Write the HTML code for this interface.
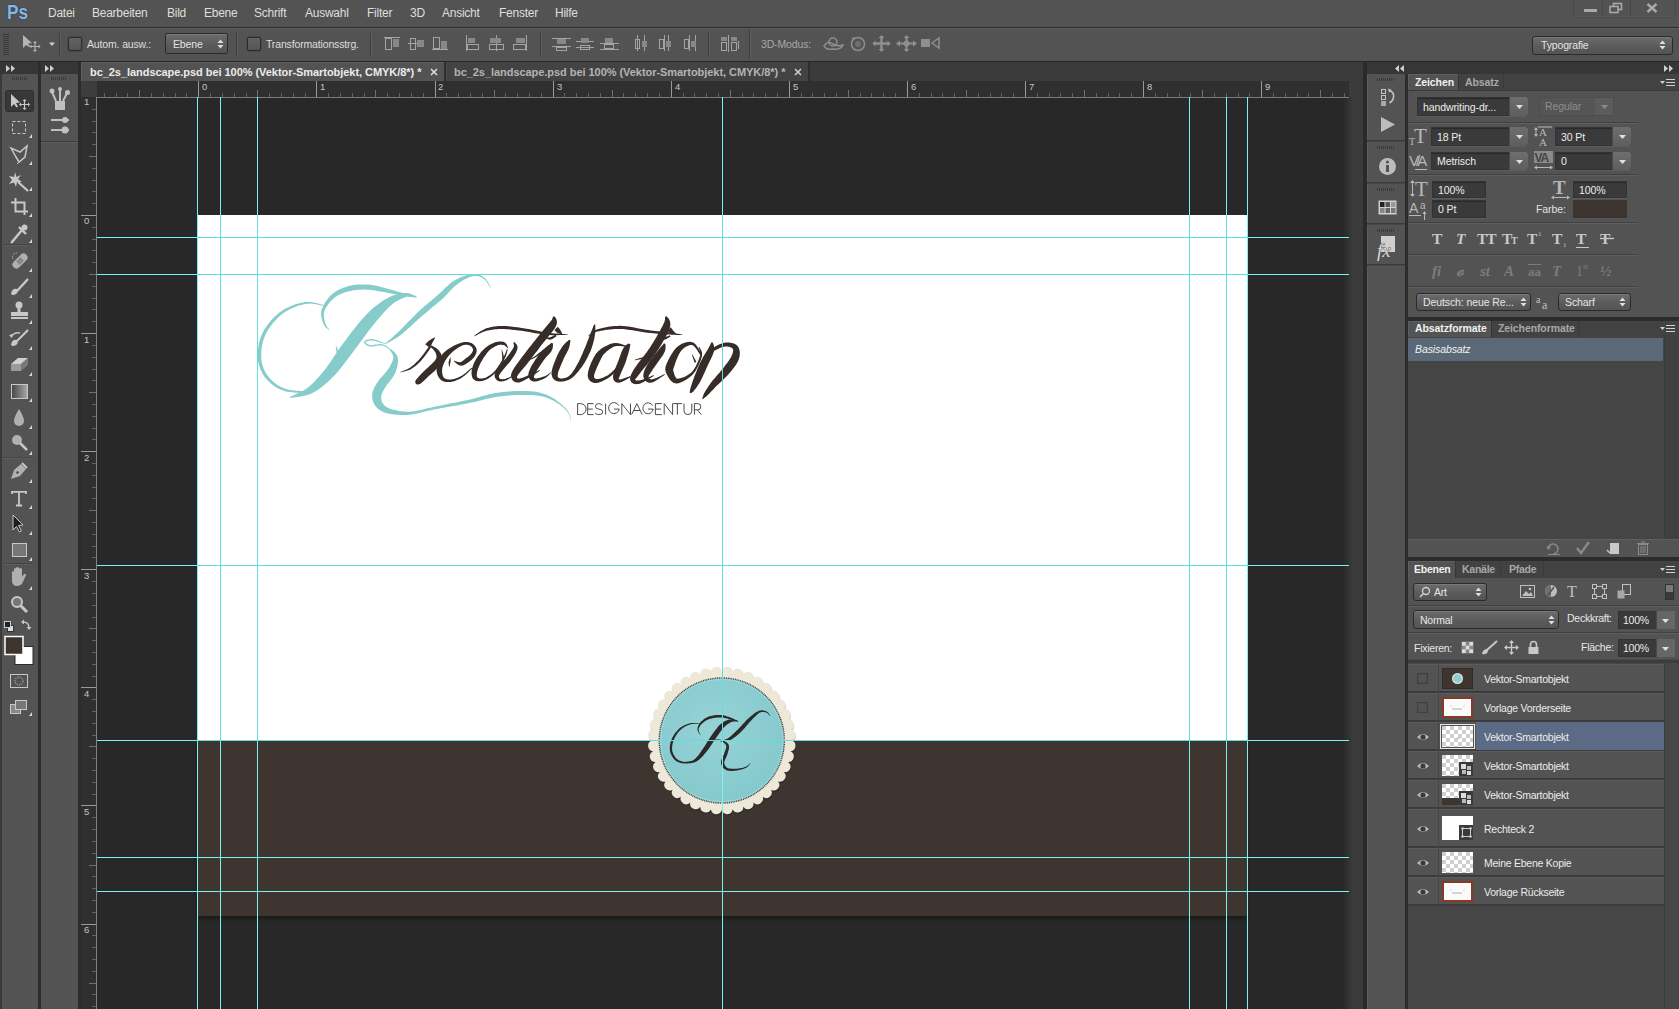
<!DOCTYPE html>
<html><head><meta charset="utf-8"><style>
*{margin:0;padding:0;box-sizing:border-box}
html,body{width:1679px;height:1009px;overflow:hidden;background:#535353;font-family:"Liberation Sans",sans-serif;position:relative}
.a{position:absolute}
.t{position:absolute;white-space:nowrap;line-height:1}



.mn{font-size:12px;color:#dcdcdc;letter-spacing:-0.25px}
.op{font-size:10.5px;color:#dedede;letter-spacing:-0.15px}
.chk{position:absolute;width:14px;height:14px;border:1px solid #2b2b2b;border-radius:2px;background:linear-gradient(#626262,#555);box-shadow:0 0 0 1px #4a4a4a}
.dd{position:absolute;border:1px solid #2a2a2a;border-radius:2px;background:linear-gradient(#6c6c6c,#5a5a5a 60%,#545454);box-shadow:inset 0 1px 0 #7a7a7a}
.sep{position:absolute;width:2px;border-left:1px solid #3e3e3e;border-right:1px solid #5f5f5f}


.tab{font-size:11px;letter-spacing:-0.05px}
.rl{font-size:9px;color:#bdbdbd}


.gv{position:absolute;width:1px;background:#6cf0f0}
.gh{position:absolute;height:1px;background:#6cf0f0}






.pt{font-size:10.5px;color:#e6e6e6;letter-spacing:-0.1px}
.fld{position:absolute;background:#3a3a3a;border:1px solid #333;box-shadow:inset 0 1px 1px #2a2a2a,0 1px 0 #5c5c5c}
.btn{position:absolute;background:linear-gradient(#6e6e6e,#5e5e5e);border-left:1px solid #4a4a4a}
.hsep{position:absolute;height:2px;border-top:1px solid #404040;border-bottom:1px solid #5f5f5f}
.ser{font-family:"Liberation Serif",serif}


.lt{font-size:10.5px;color:#ececec;letter-spacing:-0.25px}

</style></head><body>
<div class="a" style="left:0px;top:0px;width:1679px;height:27px;background:#535353;"></div>
<div class="a" style="left:0px;top:27px;width:1679px;height:1px;background:#2a2a2a;"></div>
<div class="a" style="left:0px;top:28px;width:1679px;height:33px;background:#535353;"></div>
<div class="a" style="left:0px;top:28px;width:1679px;height:1px;background:#5e5e5e;"></div>
<div class="a" style="left:0px;top:61px;width:1679px;height:1px;background:#262626;"></div>
<div class="a" style="left:0px;top:62px;width:81px;height:12px;background:#363636;"></div>
<div class="a" style="left:0px;top:74px;width:38px;height:935px;background:#535353;"></div>
<div class="a" style="left:0px;top:74px;width:2px;height:935px;background:#3a3a3a;"></div>
<div class="a" style="left:38px;top:62px;width:3px;height:947px;background:#2c2c2c;"></div>
<div class="a" style="left:41px;top:74px;width:37px;height:935px;background:#535353;"></div>
<div class="a" style="left:78px;top:62px;width:3px;height:947px;background:#2c2c2c;"></div>
<div class="a" style="left:81px;top:62px;width:1285px;height:19px;background:#3b3b3b;"></div>
<div class="a" style="left:81px;top:81px;width:1268px;height:16px;background:#2f2f2f;"></div>
<div class="a" style="left:81px;top:97px;width:16px;height:912px;background:#2f2f2f;"></div>
<div class="a" style="left:97px;top:97px;width:1252px;height:912px;background:#282828;"></div>
<div class="a" style="left:1349px;top:81px;width:14px;height:928px;background:#3b3b3b;"></div>
<div class="a" style="left:1343px;top:97px;width:10px;height:912px;background:linear-gradient(90deg,#282828,#3b3b3b);"></div>
<div class="a" style="left:1363px;top:62px;width:4px;height:947px;background:#2a2a2a;"></div>
<div class="a" style="left:1367px;top:62px;width:312px;height:12px;background:#363636;"></div>
<div class="a" style="left:1367px;top:74px;width:38px;height:935px;background:#474747;"></div>
<div class="a" style="left:1405px;top:74px;width:3px;height:935px;background:#2c2c2c;"></div>
<div class="a" style="left:1408px;top:74px;width:271px;height:935px;background:#535353;"></div>
<div class="t" style="left:7px;top:2px;font-size:20px;font-weight:bold;color:#86b6e2;transform:scaleX(0.86);transform-origin:0 0;text-shadow:0 0 1px #1c3550,0 0 1px #1c3550">Ps</div>
<div class="t mn" style="left:48px;top:6.84px;font-size:12px;color:#dedede;">Datei</div>
<div class="t mn" style="left:92px;top:6.84px;font-size:12px;color:#dedede;">Bearbeiten</div>
<div class="t mn" style="left:167px;top:6.84px;font-size:12px;color:#dedede;">Bild</div>
<div class="t mn" style="left:204px;top:6.84px;font-size:12px;color:#dedede;">Ebene</div>
<div class="t mn" style="left:254px;top:6.84px;font-size:12px;color:#dedede;">Schrift</div>
<div class="t mn" style="left:305px;top:6.84px;font-size:12px;color:#dedede;">Auswahl</div>
<div class="t mn" style="left:367px;top:6.84px;font-size:12px;color:#dedede;">Filter</div>
<div class="t mn" style="left:410px;top:6.84px;font-size:12px;color:#dedede;">3D</div>
<div class="t mn" style="left:442px;top:6.84px;font-size:12px;color:#dedede;">Ansicht</div>
<div class="t mn" style="left:499px;top:6.84px;font-size:12px;color:#dedede;">Fenster</div>
<div class="t mn" style="left:555px;top:6.84px;font-size:12px;color:#dedede;">Hilfe</div>
<div class="a" style="left:1573px;top:0px;width:103px;height:18px;background:#535353;border:1px solid #4a4a4a;border-top:none;box-shadow:inset 0 -1px 0 #5a5a5a"></div>
<div class="a" style="left:1602px;top:0px;width:1px;height:17px;background:#474747;"></div>
<div class="a" style="left:1630px;top:0px;width:1px;height:17px;background:#474747;"></div>
<div class="a" style="left:1584px;top:9px;width:13px;height:3px;background:#a9a9a9;"></div>
<svg class="a" style="left:1609px;top:2px;" width="14" height="12" viewBox="0 0 14 12"><rect x="4.5" y="1.5" width="8" height="6" fill="none" stroke="#a9a9a9" stroke-width="1.6"/><rect x="1" y="4.5" width="8" height="6" fill="#535353" stroke="#a9a9a9" stroke-width="1.6"/></svg>
<svg class="a" style="left:1646px;top:3px;" width="12" height="10" viewBox="0 0 12 10"><path d="M1.5 1 L10.5 9 M10.5 1 L1.5 9" stroke="#a9a9a9" stroke-width="2.4"/></svg>
<svg class="a" style="left:3px;top:34px;" width="6" height="22" viewBox="0 0 6 22"><rect x="0" y="0" width="6" height="1" fill="#3a3a3a"/><rect x="0" y="2" width="6" height="1" fill="#3a3a3a"/><rect x="0" y="4" width="6" height="1" fill="#3a3a3a"/><rect x="0" y="6" width="6" height="1" fill="#3a3a3a"/><rect x="0" y="8" width="6" height="1" fill="#3a3a3a"/><rect x="0" y="10" width="6" height="1" fill="#3a3a3a"/><rect x="0" y="12" width="6" height="1" fill="#3a3a3a"/><rect x="0" y="14" width="6" height="1" fill="#3a3a3a"/><rect x="0" y="16" width="6" height="1" fill="#3a3a3a"/><rect x="0" y="18" width="6" height="1" fill="#3a3a3a"/><rect x="0" y="20" width="6" height="1" fill="#3a3a3a"/></svg>
<svg class="a" style="left:20px;top:34px;" width="22" height="18" viewBox="0 0 22 18"><path d="M3 1 L3 14 L6 11 L9 13 L10 12 L8 9.5 L12 9 Z" fill="#b4b4b4"/><path d="M15 8 V17 M10.5 12.5 H19.5" stroke="#b4b4b4" stroke-width="1.2"/><path d="M15 7 l-2 2 h4z M15 18 l-2 -2 h4z M9.5 12.5 l2 -2 v4z M20.5 12.5 l-2 -2 v4z" fill="#b4b4b4"/></svg>
<svg class="a" style="left:49px;top:42px;" width="7" height="5" viewBox="0 0 7 5"><path d="M0 0.5 H6 L3 4z" fill="#cfcfcf"/></svg>
<div class="sep" style="left:59px;top:33px;height:23px"></div>
<div class="chk" style="left:68px;top:37px"></div>
<div class="t op" style="left:87px;top:39.11px;font-size:10.5px;color:#dedede;">Autom. ausw.:</div>
<div class="dd" style="left:165px;top:33px;width:63px;height:21px"></div>
<div class="t op" style="left:173px;top:39.11px;font-size:10.5px;color:#e2e2e2;">Ebene</div>
<svg class="a" style="left:217px;top:39px;" width="7" height="10" viewBox="0 0 7 10"><path d="M0.5 4 L3.5 0.5 L6.5 4Z M0.5 6 L3.5 9.5 L6.5 6Z" fill="#e0e0e0"/></svg>
<div class="sep" style="left:236px;top:33px;height:23px"></div>
<div class="chk" style="left:247px;top:37px"></div>
<div class="t op" style="left:266px;top:39.11px;font-size:10.5px;color:#dedede;">Transformationsstrg.</div>
<div class="sep" style="left:370px;top:33px;height:23px"></div>
<div class="sep" style="left:540px;top:33px;height:23px"></div>
<svg class="a" style="left:384px;top:35px;" width="19" height="17" viewBox="0 0 19 17"><path d="M0 2.5 H16" stroke="#a4a4a4"/><rect x="1.5" y="3.5" width="6" height="11" fill="none" stroke="#a4a4a4"/><rect x="9" y="4" width="6" height="8" fill="#888888"/></svg>
<svg class="a" style="left:408px;top:35px;" width="19" height="17" viewBox="0 0 19 17"><path d="M0 8.5 H16" stroke="#a4a4a4"/><rect x="2.5" y="3.5" width="5" height="11" fill="none" stroke="#a4a4a4"/><rect x="9" y="5" width="7" height="7" fill="#888888"/></svg>
<svg class="a" style="left:432px;top:35px;" width="19" height="17" viewBox="0 0 19 17"><path d="M0 14.5 H16" stroke="#a4a4a4"/><rect x="1.5" y="2.5" width="6" height="11" fill="none" stroke="#a4a4a4"/><rect x="9" y="6" width="6" height="8" fill="#888888"/></svg>
<svg class="a" style="left:465px;top:35px;" width="19" height="17" viewBox="0 0 19 17"><path d="M1.5 0 V16" stroke="#a4a4a4"/><rect x="3" y="3" width="7" height="5" fill="#888888"/><rect x="2.5" y="9.5" width="11" height="5" fill="none" stroke="#a4a4a4"/></svg>
<svg class="a" style="left:489px;top:35px;" width="19" height="17" viewBox="0 0 19 17"><path d="M7.5 0 V16" stroke="#a4a4a4"/><rect x="1" y="3" width="11" height="5" fill="#888888"/><rect x="0.5" y="9.5" width="14" height="5" fill="none" stroke="#a4a4a4"/></svg>
<svg class="a" style="left:512px;top:35px;" width="19" height="17" viewBox="0 0 19 17"><path d="M14.5 0 V16" stroke="#a4a4a4"/><rect x="4" y="3" width="9" height="5" fill="#888888"/><rect x="1.5" y="9.5" width="12" height="5" fill="none" stroke="#a4a4a4"/></svg>
<svg class="a" style="left:552px;top:35px;" width="19" height="17" viewBox="0 0 19 17"><path d="M0 3.5 H19 M0 11.5 H19" stroke="#a4a4a4"/><rect x="5" y="4" width="9" height="5" fill="#888888"/><rect x="4.5" y="12.5" width="10" height="3" fill="none" stroke="#a4a4a4"/></svg>
<svg class="a" style="left:576px;top:35px;" width="19" height="17" viewBox="0 0 19 17"><path d="M0 6.5 H18 M0 12.5 H18" stroke="#a4a4a4"/><rect x="5" y="3" width="8" height="5" fill="#888888"/><rect x="4.5" y="10.5" width="9" height="4" fill="none" stroke="#a4a4a4"/></svg>
<svg class="a" style="left:600px;top:35px;" width="19" height="17" viewBox="0 0 19 17"><path d="M0 8.5 H19 M0 14.5 H19" stroke="#a4a4a4"/><rect x="5" y="3" width="8" height="5" fill="#888888"/><rect x="4.5" y="9.5" width="9" height="4" fill="none" stroke="#a4a4a4"/></svg>
<svg class="a" style="left:634px;top:35px;" width="19" height="17" viewBox="0 0 19 17"><path d="M3.5 0 V16 M10.5 0 V16" stroke="#a4a4a4"/><rect x="1.5" y="4.5" width="4" height="9" fill="none" stroke="#a4a4a4"/><rect x="8" y="6" width="5" height="6" fill="#888888"/></svg>
<svg class="a" style="left:658px;top:35px;" width="19" height="17" viewBox="0 0 19 17"><path d="M6.5 0 V16 M10.5 0 V16" stroke="#a4a4a4"/><rect x="1.5" y="4.5" width="4" height="9" fill="none" stroke="#a4a4a4"/><rect x="8" y="6" width="5" height="6" fill="#888888"/></svg>
<svg class="a" style="left:683px;top:35px;" width="19" height="17" viewBox="0 0 19 17"><path d="M6.5 0 V16 M12.5 0 V16" stroke="#a4a4a4"/><rect x="1.5" y="4.5" width="4" height="9" fill="none" stroke="#a4a4a4"/><rect x="8" y="6" width="5" height="6" fill="#888888"/></svg>
<div class="sep" style="left:708px;top:33px;height:23px"></div>
<svg class="a" style="left:720px;top:35px;" width="21" height="17" viewBox="0 0 21 17"><rect x="1" y="2" width="6" height="4" fill="#888888"/><rect x="11" y="2" width="6" height="4" fill="#888888"/><rect x="1.5" y="7.5" width="5" height="8" fill="none" stroke="#a4a4a4"/><rect x="11.5" y="7.5" width="5" height="8" fill="none" stroke="#a4a4a4"/><path d="M8.5 0 V17 M18.5 6 V14" stroke="#a4a4a4"/></svg>
<div class="sep" style="left:749px;top:30px;height:29px"></div>
<div class="t op" style="left:761px;top:39.11px;font-size:10.5px;color:#a8a8a8;">3D-Modus:</div>
<svg class="a" style="left:823px;top:35px;" width="21" height="17" viewBox="0 0 21 17"><circle cx="10" cy="7" r="4" fill="none" stroke="#8f8f8f" stroke-width="1.5"/><path d="M1 11 Q5 5 10 9 Q16 12 20 10 Q18 15 10 14 Q3 15 1 11Z" fill="none" stroke="#8f8f8f" stroke-width="1.5"/></svg>
<svg class="a" style="left:849px;top:35px;" width="18" height="17" viewBox="0 0 18 17"><circle cx="9" cy="9" r="6.5" fill="none" stroke="#8f8f8f" stroke-width="1.5"/><circle cx="9" cy="9" r="3" fill="#6f6f6f"/><path d="M3 2 l3 1 l-2 2z" fill="#8f8f8f"/></svg>
<svg class="a" style="left:872px;top:35px;" width="19" height="17" viewBox="0 0 19 17"><path d="M9.5 1 V16 M1.5 8.5 H17.5" stroke="#8f8f8f" stroke-width="2.4"/><path d="M9.5 0 l-3 3 h6z M9.5 17 l-3 -3 h6z M0.5 8.5 l3 -3 v6z M18.5 8.5 l-3 -3 v6z" fill="#8f8f8f"/></svg>
<svg class="a" style="left:896px;top:35px;" width="21" height="17" viewBox="0 0 21 17"><path d="M10.5 2 V15 M1 8.5 H20" stroke="#8f8f8f" stroke-width="2"/><path d="M10.5 0 l-3 3 h6z M10.5 17 l-3 -3 h6z M0 8.5 l4 -3 v6z M21 8.5 l-4 -3 v6z" fill="#8f8f8f"/><circle cx="10.5" cy="8.5" r="3" fill="#8f8f8f"/></svg>
<svg class="a" style="left:920px;top:36px;" width="21" height="15" viewBox="0 0 21 15"><rect x="1" y="3" width="9" height="8" fill="#8f8f8f"/><path d="M12 7 L19 2 V12 Z" fill="none" stroke="#8f8f8f" stroke-width="1.5"/></svg>
<div class="dd" style="left:1532px;top:36px;width:141px;height:19px;border-radius:3px"></div>
<div class="t op" style="left:1541px;top:40.11px;font-size:10.5px;color:#e4e4e4;">Typografie</div>
<svg class="a" style="left:1659px;top:40px;" width="7" height="10" viewBox="0 0 7 10"><path d="M0.5 4 L3.5 0.5 L6.5 4Z M0.5 6 L3.5 9.5 L6.5 6Z" fill="#e0e0e0"/></svg>
<div class="a" style="left:81px;top:62px;width:363px;height:19px;background:#535353;box-shadow:inset 1px 1px 0 #5f5f5f"></div>
<div class="a" style="left:444px;top:62px;width:2px;height:19px;background:#2e2e2e;"></div>
<div class="a" style="left:446px;top:62px;width:362px;height:19px;background:#434343;box-shadow:inset 1px 0 0 #4a4a4a"></div>
<div class="a" style="left:808px;top:62px;width:2px;height:19px;background:#2e2e2e;"></div>
<div class="t tab" style="left:90px;top:66.69px;font-size:11px;color:#ececec;font-weight:bold;letter-spacing:-0.05px">bc_2s_landscape.psd bei 100% (Vektor-Smartobjekt, CMYK/8*) *</div>
<div class="t tab" style="left:454px;top:66.69px;font-size:11px;color:#b4b4b4;font-weight:bold;letter-spacing:-0.05px">bc_2s_landscape.psd bei 100% (Vektor-Smartobjekt, CMYK/8*) *</div>
<svg class="a" style="left:430px;top:68px;" width="8" height="8" viewBox="0 0 8 8"><path d="M1 1 L7 7 M7 1 L1 7" stroke="#e0e0e0" stroke-width="1.5"/></svg>
<svg class="a" style="left:794px;top:68px;" width="8" height="8" viewBox="0 0 8 8"><path d="M1 1 L7 7 M7 1 L1 7" stroke="#d0d0d0" stroke-width="1.5"/></svg>
<div class="a" style="left:81px;top:81px;width:16px;height:16px;background:#3d3d3d;"></div>
<svg class="a" style="left:97px;top:81px;" width="1252" height="17" viewBox="0 0 1252 17"><rect x="0" y="16" width="1252" height="1" fill="#7a7a7a"/><path d="M7.5 12 V16" stroke="#626262"/><path d="M19.5 12 V16" stroke="#626262"/><path d="M30.5 12 V16" stroke="#626262"/><path d="M42.5 9 V16" stroke="#707070"/><path d="M54.5 12 V16" stroke="#626262"/><path d="M66.5 12 V16" stroke="#626262"/><path d="M78.5 12 V16" stroke="#626262"/><path d="M89.5 12 V16" stroke="#626262"/><path d="M101.5 0 V16" stroke="#9a9a9a"/><path d="M113.5 12 V16" stroke="#626262"/><path d="M125.5 12 V16" stroke="#626262"/><path d="M137.5 12 V16" stroke="#626262"/><path d="M149.5 12 V16" stroke="#626262"/><path d="M160.5 9 V16" stroke="#707070"/><path d="M172.5 12 V16" stroke="#626262"/><path d="M184.5 12 V16" stroke="#626262"/><path d="M196.5 12 V16" stroke="#626262"/><path d="M208.5 12 V16" stroke="#626262"/><path d="M219.5 0 V16" stroke="#9a9a9a"/><path d="M231.5 12 V16" stroke="#626262"/><path d="M243.5 12 V16" stroke="#626262"/><path d="M255.5 12 V16" stroke="#626262"/><path d="M267.5 12 V16" stroke="#626262"/><path d="M278.5 9 V16" stroke="#707070"/><path d="M290.5 12 V16" stroke="#626262"/><path d="M302.5 12 V16" stroke="#626262"/><path d="M314.5 12 V16" stroke="#626262"/><path d="M326.5 12 V16" stroke="#626262"/><path d="M338.5 0 V16" stroke="#9a9a9a"/><path d="M349.5 12 V16" stroke="#626262"/><path d="M361.5 12 V16" stroke="#626262"/><path d="M373.5 12 V16" stroke="#626262"/><path d="M385.5 12 V16" stroke="#626262"/><path d="M397.5 9 V16" stroke="#707070"/><path d="M408.5 12 V16" stroke="#626262"/><path d="M420.5 12 V16" stroke="#626262"/><path d="M432.5 12 V16" stroke="#626262"/><path d="M444.5 12 V16" stroke="#626262"/><path d="M456.5 0 V16" stroke="#9a9a9a"/><path d="M467.5 12 V16" stroke="#626262"/><path d="M479.5 12 V16" stroke="#626262"/><path d="M491.5 12 V16" stroke="#626262"/><path d="M503.5 12 V16" stroke="#626262"/><path d="M515.5 9 V16" stroke="#707070"/><path d="M526.5 12 V16" stroke="#626262"/><path d="M538.5 12 V16" stroke="#626262"/><path d="M550.5 12 V16" stroke="#626262"/><path d="M562.5 12 V16" stroke="#626262"/><path d="M574.5 0 V16" stroke="#9a9a9a"/><path d="M586.5 12 V16" stroke="#626262"/><path d="M597.5 12 V16" stroke="#626262"/><path d="M609.5 12 V16" stroke="#626262"/><path d="M621.5 12 V16" stroke="#626262"/><path d="M633.5 9 V16" stroke="#707070"/><path d="M645.5 12 V16" stroke="#626262"/><path d="M656.5 12 V16" stroke="#626262"/><path d="M668.5 12 V16" stroke="#626262"/><path d="M680.5 12 V16" stroke="#626262"/><path d="M692.5 0 V16" stroke="#9a9a9a"/><path d="M704.5 12 V16" stroke="#626262"/><path d="M715.5 12 V16" stroke="#626262"/><path d="M727.5 12 V16" stroke="#626262"/><path d="M739.5 12 V16" stroke="#626262"/><path d="M751.5 9 V16" stroke="#707070"/><path d="M763.5 12 V16" stroke="#626262"/><path d="M774.5 12 V16" stroke="#626262"/><path d="M786.5 12 V16" stroke="#626262"/><path d="M798.5 12 V16" stroke="#626262"/><path d="M810.5 0 V16" stroke="#9a9a9a"/><path d="M822.5 12 V16" stroke="#626262"/><path d="M834.5 12 V16" stroke="#626262"/><path d="M845.5 12 V16" stroke="#626262"/><path d="M857.5 12 V16" stroke="#626262"/><path d="M869.5 9 V16" stroke="#707070"/><path d="M881.5 12 V16" stroke="#626262"/><path d="M893.5 12 V16" stroke="#626262"/><path d="M904.5 12 V16" stroke="#626262"/><path d="M916.5 12 V16" stroke="#626262"/><path d="M928.5 0 V16" stroke="#9a9a9a"/><path d="M940.5 12 V16" stroke="#626262"/><path d="M952.5 12 V16" stroke="#626262"/><path d="M963.5 12 V16" stroke="#626262"/><path d="M975.5 12 V16" stroke="#626262"/><path d="M987.5 9 V16" stroke="#707070"/><path d="M999.5 12 V16" stroke="#626262"/><path d="M1011.5 12 V16" stroke="#626262"/><path d="M1022.5 12 V16" stroke="#626262"/><path d="M1034.5 12 V16" stroke="#626262"/><path d="M1046.5 0 V16" stroke="#9a9a9a"/><path d="M1058.5 12 V16" stroke="#626262"/><path d="M1070.5 12 V16" stroke="#626262"/><path d="M1082.5 12 V16" stroke="#626262"/><path d="M1093.5 12 V16" stroke="#626262"/><path d="M1105.5 9 V16" stroke="#707070"/><path d="M1117.5 12 V16" stroke="#626262"/><path d="M1129.5 12 V16" stroke="#626262"/><path d="M1141.5 12 V16" stroke="#626262"/><path d="M1152.5 12 V16" stroke="#626262"/><path d="M1164.5 0 V16" stroke="#9a9a9a"/><path d="M1176.5 12 V16" stroke="#626262"/><path d="M1188.5 12 V16" stroke="#626262"/><path d="M1200.5 12 V16" stroke="#626262"/><path d="M1211.5 12 V16" stroke="#626262"/><path d="M1223.5 9 V16" stroke="#707070"/><path d="M1235.5 12 V16" stroke="#626262"/><path d="M1247.5 12 V16" stroke="#626262"/></svg>
<div class="t rl" style="left:202px;top:81.96px;font-size:9.5px;color:#c4c4c4;">0</div>
<div class="t rl" style="left:320px;top:81.96px;font-size:9.5px;color:#c4c4c4;">1</div>
<div class="t rl" style="left:438px;top:81.96px;font-size:9.5px;color:#c4c4c4;">2</div>
<div class="t rl" style="left:557px;top:81.96px;font-size:9.5px;color:#c4c4c4;">3</div>
<div class="t rl" style="left:675px;top:81.96px;font-size:9.5px;color:#c4c4c4;">4</div>
<div class="t rl" style="left:793px;top:81.96px;font-size:9.5px;color:#c4c4c4;">5</div>
<div class="t rl" style="left:911px;top:81.96px;font-size:9.5px;color:#c4c4c4;">6</div>
<div class="t rl" style="left:1029px;top:81.96px;font-size:9.5px;color:#c4c4c4;">7</div>
<div class="t rl" style="left:1147px;top:81.96px;font-size:9.5px;color:#c4c4c4;">8</div>
<div class="t rl" style="left:1265px;top:81.96px;font-size:9.5px;color:#c4c4c4;">9</div>
<svg class="a" style="left:81px;top:97px;" width="16" height="912" viewBox="0 0 16 912"><rect x="15" y="0" width="1" height="912" fill="#808080"/><path d="M11 12.5 H15" stroke="#626262"/><path d="M11 24.5 H15" stroke="#626262"/><path d="M11 35.5 H15" stroke="#626262"/><path d="M11 47.5 H15" stroke="#626262"/><path d="M8 59.5 H15" stroke="#707070"/><path d="M11 71.5 H15" stroke="#626262"/><path d="M11 83.5 H15" stroke="#626262"/><path d="M11 94.5 H15" stroke="#626262"/><path d="M11 106.5 H15" stroke="#626262"/><path d="M0 118.5 H15" stroke="#9a9a9a"/><path d="M11 130.5 H15" stroke="#626262"/><path d="M11 142.5 H15" stroke="#626262"/><path d="M11 153.5 H15" stroke="#626262"/><path d="M11 165.5 H15" stroke="#626262"/><path d="M8 177.5 H15" stroke="#707070"/><path d="M11 189.5 H15" stroke="#626262"/><path d="M11 201.5 H15" stroke="#626262"/><path d="M11 212.5 H15" stroke="#626262"/><path d="M11 224.5 H15" stroke="#626262"/><path d="M0 236.5 H15" stroke="#9a9a9a"/><path d="M11 248.5 H15" stroke="#626262"/><path d="M11 260.5 H15" stroke="#626262"/><path d="M11 272.5 H15" stroke="#626262"/><path d="M11 283.5 H15" stroke="#626262"/><path d="M8 295.5 H15" stroke="#707070"/><path d="M11 307.5 H15" stroke="#626262"/><path d="M11 319.5 H15" stroke="#626262"/><path d="M11 331.5 H15" stroke="#626262"/><path d="M11 342.5 H15" stroke="#626262"/><path d="M0 354.5 H15" stroke="#9a9a9a"/><path d="M11 366.5 H15" stroke="#626262"/><path d="M11 378.5 H15" stroke="#626262"/><path d="M11 390.5 H15" stroke="#626262"/><path d="M11 401.5 H15" stroke="#626262"/><path d="M8 413.5 H15" stroke="#707070"/><path d="M11 425.5 H15" stroke="#626262"/><path d="M11 437.5 H15" stroke="#626262"/><path d="M11 449.5 H15" stroke="#626262"/><path d="M11 460.5 H15" stroke="#626262"/><path d="M0 472.5 H15" stroke="#9a9a9a"/><path d="M11 484.5 H15" stroke="#626262"/><path d="M11 496.5 H15" stroke="#626262"/><path d="M11 508.5 H15" stroke="#626262"/><path d="M11 520.5 H15" stroke="#626262"/><path d="M8 531.5 H15" stroke="#707070"/><path d="M11 543.5 H15" stroke="#626262"/><path d="M11 555.5 H15" stroke="#626262"/><path d="M11 567.5 H15" stroke="#626262"/><path d="M11 579.5 H15" stroke="#626262"/><path d="M0 590.5 H15" stroke="#9a9a9a"/><path d="M11 602.5 H15" stroke="#626262"/><path d="M11 614.5 H15" stroke="#626262"/><path d="M11 626.5 H15" stroke="#626262"/><path d="M11 638.5 H15" stroke="#626262"/><path d="M8 649.5 H15" stroke="#707070"/><path d="M11 661.5 H15" stroke="#626262"/><path d="M11 673.5 H15" stroke="#626262"/><path d="M11 685.5 H15" stroke="#626262"/><path d="M11 697.5 H15" stroke="#626262"/><path d="M0 708.5 H15" stroke="#9a9a9a"/><path d="M11 720.5 H15" stroke="#626262"/><path d="M11 732.5 H15" stroke="#626262"/><path d="M11 744.5 H15" stroke="#626262"/><path d="M11 756.5 H15" stroke="#626262"/><path d="M8 768.5 H15" stroke="#707070"/><path d="M11 779.5 H15" stroke="#626262"/><path d="M11 791.5 H15" stroke="#626262"/><path d="M11 803.5 H15" stroke="#626262"/><path d="M11 815.5 H15" stroke="#626262"/><path d="M0 827.5 H15" stroke="#9a9a9a"/><path d="M11 838.5 H15" stroke="#626262"/><path d="M11 850.5 H15" stroke="#626262"/><path d="M11 862.5 H15" stroke="#626262"/><path d="M11 874.5 H15" stroke="#626262"/><path d="M8 886.5 H15" stroke="#707070"/><path d="M11 897.5 H15" stroke="#626262"/><path d="M11 909.5 H15" stroke="#626262"/></svg>
<div class="t rl" style="left:84px;top:97.46px;font-size:9.5px;color:#c4c4c4;">1</div>
<div class="t rl" style="left:84px;top:216.46px;font-size:9.5px;color:#c4c4c4;">0</div>
<div class="t rl" style="left:84px;top:334.56px;font-size:9.5px;color:#c4c4c4;">1</div>
<div class="t rl" style="left:84px;top:452.66px;font-size:9.5px;color:#c4c4c4;">2</div>
<div class="t rl" style="left:84px;top:570.76px;font-size:9.5px;color:#c4c4c4;">3</div>
<div class="t rl" style="left:84px;top:688.86px;font-size:9.5px;color:#c4c4c4;">4</div>
<div class="t rl" style="left:84px;top:806.96px;font-size:9.5px;color:#c4c4c4;">5</div>
<div class="t rl" style="left:84px;top:925.06px;font-size:9.5px;color:#c4c4c4;">6</div>
<div class="a" style="left:197px;top:215px;width:1051px;height:526px;background:#ffffff;"></div>
<div class="a" style="left:197px;top:741px;width:1050px;height:175px;background:#3e3531;box-shadow:0 3px 4px rgba(0,0,0,0.35)"></div>
<svg class="a" style="left:0;top:0" width="1679" height="1009" viewBox="0 0 1679 1009"><path d="M416.6 297.2 L415.2 296.8 L413.4 296.2 L411.3 295.6 L408.9 294.9 L406.3 294.1 L403.6 293.3 L400.9 292.5 L398.2 291.7 L395.5 290.9 L393.1 290.3 L390.7 289.6 L388.3 289.0 L385.9 288.3 L383.5 287.6 L381.1 287.0 L378.7 286.3 L376.2 285.8 L373.8 285.3 L371.4 284.9 L369.1 284.6 L366.8 284.5 L364.5 284.4 L362.3 284.4 L360.1 284.4 L357.9 284.6 L355.8 284.8 L353.7 285.1 L351.6 285.4 L349.6 285.8 L347.7 286.3 L345.8 286.9 L343.9 287.5 L342.1 288.2 L340.3 289.0 L338.6 289.8 L337.0 290.8 L335.4 291.7 L333.8 292.8 L332.4 293.9 L331.0 295.1 L329.7 296.4 L328.5 297.9 L327.3 299.4 L326.1 301.0 L325.1 302.6 L324.1 304.2 L323.3 305.9 L322.6 307.5 L322.0 309.1 L321.5 310.6 L321.2 312.1 L321.1 313.7 L321.2 315.2 L321.4 316.7 L321.6 318.1 L322.0 319.4 L322.4 320.7 L322.8 321.9 L323.2 323.0 L323.6 324.0 L324.1 325.0 L324.6 325.9 L325.2 326.7 L325.9 327.4 L326.6 328.1 L327.2 328.6 L327.8 329.1 L328.3 329.5 L328.7 329.9 L329.1 330.2 L329.5 329.8 L329.3 329.4 L328.9 329.0 L328.4 328.4 L328.0 327.9 L327.4 327.2 L326.9 326.5 L326.5 325.8 L326.0 325.0 L325.7 324.2 L325.4 323.4 L325.1 322.4 L324.8 321.3 L324.5 320.1 L324.2 318.9 L324.0 317.6 L323.8 316.3 L323.8 315.1 L323.8 313.8 L324.0 312.6 L324.3 311.4 L324.8 310.1 L325.4 308.8 L326.2 307.4 L327.0 306.0 L328.0 304.5 L329.1 303.1 L330.2 301.8 L331.4 300.5 L332.6 299.3 L333.8 298.3 L335.0 297.3 L336.3 296.4 L337.7 295.6 L339.2 294.8 L340.7 294.1 L342.3 293.4 L343.9 292.8 L345.5 292.2 L347.2 291.7 L348.9 291.3 L350.7 290.9 L352.5 290.5 L354.4 290.2 L356.3 290.0 L358.3 289.8 L360.3 289.7 L362.4 289.6 L364.5 289.6 L366.6 289.7 L368.7 289.8 L370.9 289.9 L373.1 290.2 L375.4 290.5 L377.7 290.9 L380.1 291.4 L382.5 291.8 L385.0 292.3 L387.4 292.8 L389.9 293.3 L392.3 293.7 L394.8 294.1 L397.5 294.6 L400.3 295.1 L403.1 295.5 L405.9 296.0 L408.5 296.5 L411.0 296.9 L413.1 297.3 L415.0 297.6 L416.4 297.8Z" fill="#86cccb"/><path d="M326.1 305.7 L324.9 305.4 L323.4 305.0 L321.6 304.5 L319.6 303.9 L317.4 303.3 L315.0 302.8 L312.6 302.3 L310.2 302.0 L307.7 301.9 L305.4 302.1 L303.0 302.4 L300.6 302.9 L298.1 303.6 L295.5 304.3 L293.0 305.2 L290.4 306.2 L287.9 307.4 L285.5 308.6 L283.1 310.0 L280.9 311.5 L278.7 313.1 L276.6 314.9 L274.5 316.8 L272.5 318.8 L270.6 321.0 L268.8 323.2 L267.1 325.5 L265.5 327.8 L264.0 330.1 L262.8 332.4 L261.7 334.8 L260.7 337.3 L259.9 339.8 L259.2 342.3 L258.7 344.9 L258.3 347.4 L258.0 349.9 L257.8 352.4 L257.8 354.8 L257.8 357.1 L258.0 359.3 L258.2 361.5 L258.7 363.6 L259.2 365.7 L259.9 367.7 L260.6 369.7 L261.5 371.6 L262.4 373.4 L263.5 375.2 L264.6 376.9 L265.9 378.5 L267.3 380.1 L268.8 381.6 L270.4 383.1 L272.0 384.4 L273.8 385.7 L275.6 386.9 L277.4 388.0 L279.3 389.0 L281.2 389.8 L283.2 390.6 L285.3 391.2 L287.4 391.7 L289.6 392.0 L291.9 392.3 L294.1 392.5 L296.3 392.7 L298.4 392.7 L300.4 392.7 L302.3 392.7 L304.2 392.5 L306.1 392.2 L308.0 391.7 L309.8 391.2 L311.6 390.6 L313.2 390.0 L314.7 389.5 L316.1 389.0 L317.2 388.6 L318.1 388.3 L317.9 387.7 L317.0 387.9 L315.8 388.3 L314.5 388.7 L312.9 389.1 L311.3 389.6 L309.5 390.0 L307.7 390.4 L305.9 390.7 L304.1 390.9 L302.3 390.9 L300.4 390.9 L298.4 390.8 L296.4 390.7 L294.3 390.5 L292.1 390.2 L290.0 389.9 L287.9 389.4 L285.9 388.9 L284.0 388.3 L282.2 387.6 L280.5 386.7 L278.7 385.7 L277.0 384.7 L275.4 383.5 L273.8 382.2 L272.3 380.9 L270.8 379.5 L269.5 378.1 L268.3 376.6 L267.2 375.1 L266.2 373.5 L265.2 371.9 L264.4 370.2 L263.6 368.5 L263.0 366.7 L262.4 364.8 L261.9 362.9 L261.6 360.9 L261.3 359.0 L261.2 356.9 L261.2 354.8 L261.3 352.6 L261.4 350.3 L261.7 347.9 L262.1 345.5 L262.6 343.1 L263.2 340.7 L264.0 338.4 L264.8 336.1 L265.8 334.0 L267.0 331.8 L268.3 329.6 L269.7 327.4 L271.3 325.2 L273.0 323.0 L274.8 320.9 L276.7 318.9 L278.6 317.1 L280.6 315.3 L282.5 313.7 L284.6 312.3 L286.8 310.9 L289.0 309.7 L291.4 308.5 L293.8 307.4 L296.3 306.5 L298.7 305.6 L301.1 304.9 L303.4 304.4 L305.6 303.9 L307.8 303.7 L310.1 303.6 L312.4 303.8 L314.8 304.1 L317.1 304.5 L319.3 304.9 L321.3 305.4 L323.2 305.8 L324.7 306.1 L325.9 306.3Z" fill="#86cccb"/><path d="M290.2 398.0 L291.4 397.8 L293.0 397.6 L294.9 397.3 L297.1 397.1 L299.5 396.7 L301.9 396.3 L304.5 395.8 L307.1 395.1 L309.6 394.2 L312.0 393.2 L314.3 392.0 L316.5 390.7 L318.7 389.2 L320.8 387.7 L323.0 386.0 L325.1 384.3 L327.2 382.4 L329.3 380.5 L331.3 378.5 L333.4 376.4 L335.5 374.2 L337.6 371.9 L339.6 369.4 L341.6 366.9 L343.6 364.4 L345.6 361.8 L347.5 359.2 L349.5 356.6 L351.5 353.9 L353.5 351.3 L355.6 348.6 L357.8 345.6 L360.0 342.6 L362.3 339.6 L364.5 336.5 L366.7 333.6 L368.9 330.6 L371.0 327.9 L373.1 325.3 L375.0 322.9 L376.8 320.6 L378.7 318.5 L380.4 316.4 L382.2 314.4 L383.8 312.6 L385.5 310.8 L387.1 309.1 L388.7 307.6 L390.2 306.1 L391.7 304.8 L393.2 303.6 L394.7 302.5 L396.1 301.6 L397.6 300.7 L399.0 299.9 L400.4 299.2 L401.8 298.6 L403.1 298.0 L404.5 297.5 L405.7 297.1 L406.9 296.8 L408.0 296.6 L409.3 296.5 L410.5 296.5 L411.7 296.6 L412.8 296.7 L413.9 296.9 L414.9 297.0 L415.7 297.1 L416.4 297.2 L416.6 296.2 L416.0 296.0 L415.3 295.7 L414.4 295.3 L413.3 294.9 L412.2 294.4 L411.0 294.0 L409.6 293.6 L408.2 293.3 L406.6 293.1 L405.1 293.1 L403.6 293.2 L402.0 293.4 L400.4 293.6 L398.7 293.9 L396.9 294.3 L395.1 294.8 L393.2 295.5 L391.2 296.2 L389.3 297.1 L387.3 298.2 L385.3 299.3 L383.2 300.6 L381.2 302.0 L379.1 303.5 L377.0 305.1 L374.8 306.8 L372.6 308.6 L370.5 310.6 L368.2 312.7 L366.0 314.9 L363.7 317.4 L361.4 320.0 L359.0 322.8 L356.6 325.7 L354.3 328.8 L351.9 331.8 L349.6 334.8 L347.4 337.8 L345.2 340.7 L343.1 343.5 L341.1 346.3 L339.1 349.0 L337.2 351.8 L335.4 354.5 L333.6 357.2 L331.9 359.8 L330.2 362.3 L328.5 364.7 L326.8 367.0 L325.2 369.2 L323.5 371.3 L321.7 373.4 L320.0 375.4 L318.3 377.4 L316.7 379.2 L315.0 381.0 L313.3 382.7 L311.7 384.3 L310.0 385.8 L308.4 387.2 L306.6 388.5 L304.7 389.8 L302.7 391.0 L300.5 392.1 L298.4 393.1 L296.3 394.1 L294.3 395.0 L292.5 395.8 L291.0 396.5 L289.8 397.0Z" fill="#86cccb"/><path d="M385.8 344.1 L386.7 343.6 L387.8 343.0 L389.1 342.3 L390.6 341.4 L392.2 340.5 L393.9 339.5 L395.7 338.4 L397.5 337.2 L399.4 335.9 L401.3 334.5 L403.2 332.9 L405.2 331.2 L407.3 329.3 L409.5 327.4 L411.7 325.4 L413.9 323.3 L416.1 321.3 L418.3 319.3 L420.4 317.4 L422.5 315.6 L424.5 313.9 L426.5 312.2 L428.6 310.4 L430.6 308.8 L432.6 307.1 L434.6 305.5 L436.6 303.8 L438.4 302.3 L440.2 300.7 L442.0 299.2 L443.6 297.7 L445.1 296.2 L446.5 294.7 L447.8 293.4 L449.0 292.0 L450.2 290.7 L451.4 289.5 L452.5 288.4 L453.6 287.3 L454.8 286.3 L455.9 285.3 L457.2 284.4 L458.4 283.5 L459.6 282.6 L460.8 281.8 L462.0 281.0 L463.2 280.3 L464.3 279.6 L465.5 279.0 L466.6 278.4 L467.7 278.0 L468.7 277.5 L469.8 277.1 L470.8 276.8 L471.8 276.5 L472.7 276.3 L473.7 276.1 L474.6 276.0 L475.5 276.0 L476.4 276.0 L477.3 276.0 L478.2 276.2 L479.0 276.4 L479.9 276.7 L480.7 277.0 L481.6 277.4 L482.4 277.9 L483.1 278.3 L483.9 278.9 L484.6 279.4 L485.3 280.1 L486.0 280.9 L486.6 281.8 L487.3 282.7 L487.9 283.7 L488.5 284.7 L489.0 285.6 L489.5 286.4 L489.9 287.1 L490.2 287.6 L490.8 287.4 L490.5 286.8 L490.1 286.1 L489.7 285.3 L489.2 284.3 L488.6 283.3 L488.1 282.2 L487.4 281.2 L486.8 280.2 L486.1 279.3 L485.4 278.6 L484.7 277.9 L483.9 277.3 L483.1 276.7 L482.3 276.2 L481.4 275.7 L480.5 275.2 L479.6 274.8 L478.6 274.5 L477.6 274.2 L476.6 274.0 L475.6 273.9 L474.5 273.9 L473.5 273.9 L472.4 273.9 L471.3 274.1 L470.2 274.3 L469.0 274.5 L467.8 274.8 L466.6 275.2 L465.4 275.6 L464.2 276.0 L462.9 276.5 L461.5 277.0 L460.2 277.6 L458.8 278.2 L457.3 278.9 L455.9 279.6 L454.5 280.4 L453.1 281.3 L451.6 282.3 L450.2 283.4 L448.9 284.5 L447.6 285.7 L446.3 286.9 L445.0 288.1 L443.7 289.4 L442.4 290.7 L441.0 292.1 L439.6 293.4 L438.0 294.8 L436.4 296.3 L434.6 297.8 L432.8 299.3 L430.9 300.9 L428.9 302.6 L426.9 304.2 L424.8 306.0 L422.8 307.7 L420.7 309.6 L418.7 311.4 L416.7 313.3 L414.6 315.4 L412.5 317.5 L410.4 319.7 L408.3 321.8 L406.2 324.0 L404.2 326.0 L402.3 328.0 L400.4 329.9 L398.7 331.5 L397.1 333.1 L395.5 334.6 L393.9 336.0 L392.3 337.4 L390.9 338.7 L389.5 339.9 L388.2 341.0 L387.1 342.0 L386.1 342.8 L385.4 343.5Z" fill="#86cccb"/><path d="M389.2 349.0 L389.5 349.6 L390.0 350.3 L390.6 351.2 L391.2 352.1 L391.8 353.1 L392.4 354.2 L392.9 355.2 L393.2 356.2 L393.3 357.1 L393.3 357.9 L393.1 358.8 L392.8 359.9 L392.5 361.0 L392.0 362.2 L391.4 363.4 L390.8 364.7 L390.1 366.0 L389.4 367.2 L388.7 368.5 L388.0 369.6 L387.2 370.6 L386.4 371.7 L385.4 372.8 L384.4 374.0 L383.2 375.2 L382.1 376.5 L380.9 377.8 L379.8 379.1 L378.7 380.5 L377.7 381.9 L376.9 383.1 L376.1 384.3 L375.4 385.5 L374.7 386.7 L374.1 388.0 L373.5 389.2 L373.0 390.6 L372.6 391.9 L372.3 393.4 L372.1 394.8 L372.1 396.3 L372.2 397.7 L372.4 399.1 L372.7 400.4 L373.2 401.7 L373.7 403.0 L374.3 404.2 L375.0 405.4 L375.9 406.5 L376.7 407.5 L377.6 408.4 L378.6 409.2 L379.6 410.0 L380.7 410.7 L381.9 411.3 L383.1 411.9 L384.5 412.5 L385.9 412.9 L387.4 413.3 L388.9 413.7 L390.6 414.0 L392.5 414.2 L394.5 414.5 L396.5 414.7 L398.7 414.8 L400.9 414.9 L403.1 414.9 L405.2 414.9 L407.4 414.9 L409.5 414.7 L411.6 414.5 L413.7 414.2 L415.9 413.7 L418.0 413.3 L420.2 412.8 L422.2 412.2 L424.2 411.7 L426.1 411.2 L427.9 410.8 L429.5 410.5 L430.8 410.2 L431.9 409.9 L432.8 409.8 L433.6 409.6 L434.3 409.5 L435.1 409.3 L436.0 409.1 L437.1 408.9 L438.5 408.7 L440.3 408.3 L442.4 407.9 L444.8 407.5 L447.5 407.0 L450.4 406.5 L453.5 406.0 L456.6 405.5 L459.8 404.9 L462.9 404.3 L466.0 403.7 L469.0 403.1 L471.9 402.5 L474.7 401.9 L477.6 401.2 L480.5 400.4 L483.4 399.7 L486.2 399.0 L489.1 398.4 L491.9 397.8 L494.7 397.2 L497.5 396.8 L500.4 396.4 L503.3 396.1 L506.3 395.8 L509.3 395.5 L512.2 395.3 L515.1 395.1 L518.0 395.0 L520.7 394.9 L523.3 394.9 L525.8 394.9 L528.0 394.9 L530.2 395.0 L532.2 395.1 L534.1 395.3 L536.0 395.4 L537.8 395.7 L539.5 396.0 L541.2 396.3 L542.8 396.6 L544.5 397.1 L546.1 397.6 L547.6 398.1 L549.2 398.7 L550.7 399.4 L552.1 400.1 L553.5 400.8 L554.9 401.6 L556.3 402.4 L557.5 403.2 L558.8 404.0 L560.0 404.8 L561.1 405.7 L562.3 406.6 L563.3 407.5 L564.4 408.5 L565.3 409.4 L566.2 410.4 L567.0 411.3 L567.7 412.2 L568.4 413.1 L568.9 414.0 L569.3 414.9 L569.6 415.9 L569.8 416.9 L570.0 417.8 L570.1 418.7 L570.2 419.6 L570.3 420.4 L570.3 421.0 L570.4 421.5 L570.8 421.5 L570.7 421.0 L570.7 420.3 L570.6 419.6 L570.6 418.7 L570.5 417.8 L570.4 416.8 L570.2 415.7 L569.9 414.7 L569.5 413.7 L569.0 412.7 L568.4 411.7 L567.7 410.7 L566.9 409.7 L566.0 408.7 L565.1 407.7 L564.1 406.7 L563.0 405.7 L561.9 404.7 L560.8 403.7 L559.6 402.8 L558.4 401.9 L557.2 401.0 L555.9 400.0 L554.6 399.1 L553.2 398.2 L551.7 397.3 L550.2 396.5 L548.6 395.7 L547.0 395.0 L545.3 394.3 L543.6 393.8 L541.9 393.2 L540.2 392.8 L538.4 392.3 L536.5 392.0 L534.6 391.6 L532.5 391.4 L530.4 391.2 L528.2 391.0 L525.8 390.9 L523.3 390.9 L520.7 390.9 L517.8 390.9 L514.9 391.0 L512.0 391.2 L508.9 391.4 L505.9 391.7 L502.8 392.0 L499.8 392.4 L496.9 392.8 L494.0 393.3 L491.1 393.9 L488.2 394.6 L485.3 395.4 L482.4 396.1 L479.6 396.9 L476.7 397.7 L473.9 398.5 L471.1 399.2 L468.2 399.9 L465.3 400.5 L462.3 401.1 L459.2 401.8 L456.0 402.4 L452.9 403.1 L449.9 403.6 L447.0 404.2 L444.3 404.7 L441.9 405.2 L439.7 405.7 L438.0 406.0 L436.6 406.3 L435.5 406.6 L434.6 406.8 L433.8 406.9 L433.1 407.1 L432.3 407.3 L431.4 407.5 L430.3 407.7 L428.9 407.9 L427.3 408.3 L425.5 408.7 L423.6 409.2 L421.6 409.7 L419.6 410.2 L417.5 410.6 L415.4 411.0 L413.3 411.4 L411.3 411.6 L409.3 411.7 L407.4 411.7 L405.3 411.6 L403.2 411.4 L401.2 411.2 L399.1 410.9 L397.1 410.5 L395.2 410.1 L393.4 409.7 L391.7 409.2 L390.3 408.7 L389.0 408.2 L387.9 407.7 L386.8 407.2 L386.0 406.6 L385.2 406.0 L384.5 405.4 L383.9 404.8 L383.4 404.2 L382.9 403.6 L382.5 402.9 L382.1 402.3 L381.8 401.6 L381.6 400.9 L381.4 400.1 L381.3 399.4 L381.2 398.6 L381.2 397.9 L381.2 397.1 L381.2 396.4 L381.3 395.8 L381.4 395.1 L381.6 394.5 L381.9 393.8 L382.2 393.0 L382.6 392.1 L383.1 391.2 L383.6 390.2 L384.2 389.1 L384.9 388.0 L385.5 386.9 L386.2 385.9 L386.9 384.8 L387.9 383.6 L388.9 382.4 L390.0 381.0 L391.1 379.6 L392.2 378.2 L393.2 376.6 L394.2 375.0 L395.0 373.4 L395.7 371.8 L396.2 370.2 L396.7 368.6 L397.2 366.9 L397.5 365.3 L397.8 363.7 L398.0 362.0 L398.0 360.5 L397.9 359.0 L397.7 357.5 L397.3 356.0 L396.5 354.7 L395.7 353.5 L394.7 352.5 L393.8 351.5 L392.8 350.7 L391.9 350.0 L391.1 349.4 L390.4 348.8 L390.0 348.4Z" fill="#86cccb"/><path d="M335.7 346.1 L335.8 346.4 L335.8 346.9 L335.9 347.4 L336.0 348.0 L336.1 348.7 L336.1 349.4 L336.2 350.1 L336.4 350.8 L336.5 351.5 L336.6 352.2 L336.7 352.9 L336.9 353.7 L337.1 354.6 L337.2 355.5 L337.4 356.5 L337.6 357.3 L337.8 358.2 L338.0 358.9 L338.1 359.6 L338.2 360.0 L338.8 360.0 L338.8 359.5 L338.8 358.8 L338.8 358.1 L338.8 357.2 L338.7 356.3 L338.7 355.4 L338.7 354.4 L338.6 353.5 L338.5 352.6 L338.4 351.8 L338.3 351.1 L338.1 350.4 L337.8 349.7 L337.6 349.0 L337.3 348.3 L337.1 347.7 L336.8 347.2 L336.6 346.7 L336.4 346.3 L336.3 345.9Z" fill="#86cccb"/><path d="M385.7 343.4 L384.9 343.2 L383.9 342.8 L382.7 342.3 L381.3 341.7 L379.8 341.2 L378.3 340.6 L376.8 340.1 L375.3 339.7 L374.0 339.3 L372.8 339.1 L371.7 339.0 L370.5 339.1 L369.5 339.2 L368.4 339.4 L367.4 339.6 L366.6 339.9 L365.8 340.2 L365.1 340.6 L364.6 341.0 L364.2 341.5 L364.0 342.2 L364.2 342.8 L364.5 343.4 L365.0 344.0 L365.6 344.5 L366.2 345.0 L367.0 345.5 L367.8 345.9 L368.7 346.3 L369.6 346.5 L370.6 346.6 L371.7 346.5 L373.0 346.4 L374.2 346.2 L375.6 346.0 L376.9 345.7 L378.2 345.5 L379.4 345.4 L380.5 345.4 L381.5 345.4 L382.4 345.6 L383.4 345.9 L384.3 346.3 L385.2 346.7 L386.1 347.2 L386.9 347.6 L387.6 348.1 L388.3 348.5 L388.9 348.9 L389.4 349.1 L389.8 348.3 L389.4 348.0 L388.8 347.7 L388.2 347.2 L387.4 346.7 L386.6 346.2 L385.7 345.7 L384.8 345.2 L383.8 344.8 L382.8 344.4 L381.7 344.2 L380.5 344.1 L379.3 344.1 L378.0 344.3 L376.7 344.4 L375.3 344.6 L374.0 344.9 L372.8 345.0 L371.6 345.2 L370.6 345.2 L369.8 345.1 L369.1 344.9 L368.4 344.6 L367.7 344.3 L367.0 343.9 L366.5 343.5 L366.0 343.0 L365.7 342.6 L365.5 342.3 L365.4 342.1 L365.4 342.1 L365.5 342.0 L365.8 341.8 L366.4 341.5 L367.0 341.2 L367.8 341.0 L368.7 340.8 L369.7 340.6 L370.6 340.5 L371.6 340.5 L372.6 340.5 L373.7 340.6 L375.0 340.9 L376.4 341.3 L377.9 341.7 L379.5 342.2 L381.0 342.7 L382.4 343.1 L383.6 343.6 L384.7 343.9 L385.5 344.2Z" fill="#86cccb"/><path d="M400.5 372.4 L401.0 372.3 L401.8 372.1 L402.7 371.9 L403.7 371.6 L404.7 371.4 L405.9 371.1 L407.0 370.7 L408.2 370.3 L409.3 369.9 L410.3 369.4 L411.3 368.9 L412.2 368.3 L413.2 367.6 L414.2 366.9 L415.1 366.2 L416.1 365.4 L417.0 364.7 L417.9 363.9 L418.7 363.1 L419.6 362.3 L420.4 361.4 L421.2 360.5 L422.1 359.6 L422.8 358.6 L423.6 357.7 L424.3 356.7 L425.0 355.8 L425.7 354.9 L426.3 354.1 L426.9 353.3 L427.5 352.5 L428.0 351.8 L428.5 351.1 L429.0 350.4 L429.4 349.7 L429.8 349.1 L430.2 348.6 L430.5 348.1 L430.8 347.7 L431.0 347.3 L429.2 346.1 L429.0 346.4 L428.7 346.8 L428.3 347.3 L428.0 347.9 L427.6 348.5 L427.1 349.1 L426.6 349.8 L426.1 350.5 L425.6 351.2 L425.1 351.9 L424.5 352.7 L423.9 353.5 L423.2 354.4 L422.5 355.3 L421.8 356.3 L421.1 357.2 L420.3 358.1 L419.5 359.0 L418.8 359.9 L418.0 360.7 L417.2 361.5 L416.4 362.3 L415.6 363.1 L414.7 363.9 L413.9 364.7 L413.0 365.4 L412.1 366.1 L411.2 366.8 L410.4 367.4 L409.5 368.0 L408.6 368.5 L407.6 369.1 L406.6 369.5 L405.5 370.0 L404.4 370.4 L403.4 370.8 L402.5 371.2 L401.6 371.5 L400.9 371.8 L400.3 372.0Z" fill="#362c28"/><path d="M429.8 347.8 L430.0 347.4 L430.2 347.0 L430.4 346.6 L430.7 346.0 L431.0 345.5 L431.3 344.9 L431.6 344.3 L431.9 343.8 L432.1 343.2 L432.4 342.7 L432.6 342.2 L432.9 341.7 L433.3 341.1 L433.6 340.5 L433.9 339.9 L434.2 339.4 L434.5 338.8 L434.8 338.4 L435.0 338.0 L435.2 337.7 L434.8 337.3 L434.5 337.5 L434.1 337.7 L433.7 337.9 L433.1 338.2 L432.5 338.5 L431.9 338.8 L431.3 339.2 L430.7 339.5 L430.1 339.9 L429.6 340.3 L429.1 340.7 L428.6 341.1 L428.0 341.6 L427.5 342.0 L427.0 342.5 L426.6 343.0 L426.1 343.4 L425.8 343.7 L425.4 344.0 L425.2 344.2Z" fill="#362c28"/><path d="M430.2 346.7 L430.5 347.0 L430.9 347.4 L431.4 347.8 L431.9 348.3 L432.5 348.8 L433.1 349.3 L433.6 349.9 L434.1 350.4 L434.5 350.9 L434.8 351.4 L435.1 351.8 L435.3 352.3 L435.6 352.8 L435.8 353.4 L436.0 353.9 L436.2 354.4 L436.3 354.9 L436.4 355.3 L436.4 355.8 L436.5 356.2 L436.5 356.6 L436.5 357.0 L436.4 357.3 L436.4 357.7 L436.3 358.0 L436.2 358.3 L436.1 358.6 L436.0 358.9 L435.8 359.2 L435.6 359.5 L435.4 359.9 L435.1 360.3 L434.8 360.7 L434.4 361.2 L433.9 361.7 L433.4 362.2 L432.9 362.7 L432.4 363.3 L431.8 363.9 L431.2 364.5 L430.6 365.1 L430.0 365.6 L429.3 366.2 L428.6 366.9 L427.9 367.5 L427.2 368.2 L426.4 368.8 L425.7 369.5 L424.9 370.2 L424.2 370.9 L423.5 371.6 L422.9 372.2 L422.2 372.9 L421.6 373.6 L420.9 374.2 L420.3 374.9 L419.8 375.5 L419.3 376.1 L418.8 376.6 L418.4 377.1 L418.0 377.5 L417.7 377.9 L417.3 378.3 L417.0 378.7 L416.6 379.1 L416.3 379.5 L415.9 380.0 L415.6 380.6 L415.2 381.6 L415.6 383.5 L416.9 384.5 L417.8 384.6 L418.4 384.4 L419.0 384.2 L419.6 384.0 L420.2 383.7 L420.7 383.5 L421.2 383.3 L421.6 383.1 L421.8 383.0 L421.8 381.8 L421.5 381.7 L421.0 381.6 L420.5 381.5 L420.0 381.4 L419.4 381.2 L418.9 381.0 L418.5 380.8 L418.3 380.6 L418.6 380.5 L419.6 381.3 L420.0 382.8 L419.8 383.5 L419.8 383.6 L420.0 383.6 L420.3 383.4 L420.7 383.2 L421.2 382.9 L421.7 382.5 L422.3 382.1 L422.8 381.7 L423.4 381.2 L423.9 380.7 L424.5 380.2 L425.1 379.6 L425.7 379.0 L426.4 378.4 L427.0 377.8 L427.7 377.1 L428.3 376.5 L429.0 375.9 L429.6 375.3 L430.3 374.7 L431.0 374.1 L431.8 373.4 L432.5 372.8 L433.3 372.1 L434.1 371.4 L434.8 370.7 L435.5 370.0 L436.2 369.3 L436.8 368.6 L437.4 368.0 L438.0 367.3 L438.5 366.7 L439.1 366.0 L439.6 365.3 L440.1 364.6 L440.6 363.8 L441.0 363.1 L441.4 362.3 L441.7 361.5 L441.9 360.7 L442.0 359.9 L442.1 359.2 L442.1 358.4 L442.1 357.7 L442.0 357.0 L441.9 356.3 L441.7 355.7 L441.5 355.0 L441.3 354.3 L441.0 353.7 L440.6 353.0 L440.3 352.4 L439.8 351.8 L439.4 351.2 L438.9 350.6 L438.4 350.1 L437.9 349.6 L437.4 349.0 L436.8 348.5 L436.1 348.0 L435.4 347.6 L434.7 347.2 L433.9 346.7 L433.3 346.4 L432.6 346.0 L432.0 345.7 L431.6 345.5 L431.2 345.3Z" fill="#362c28"/><path d="M453.8 361.2 L454.1 361.4 L454.6 361.8 L455.1 362.3 L455.7 362.9 L456.4 363.4 L457.1 364.0 L457.8 364.6 L458.7 365.0 L459.5 365.4 L460.5 365.6 L461.4 365.7 L462.2 365.6 L463.0 365.4 L463.8 365.1 L464.5 364.8 L465.2 364.4 L465.9 364.0 L466.5 363.6 L467.1 363.2 L467.8 362.8 L468.4 362.3 L469.2 361.8 L469.9 361.2 L470.7 360.6 L471.5 359.9 L472.2 359.2 L472.9 358.5 L473.6 357.8 L474.2 357.0 L474.8 356.3 L475.2 355.5 L475.6 354.8 L475.9 354.0 L476.2 353.3 L476.4 352.5 L476.6 351.7 L476.6 350.9 L476.6 350.1 L476.6 349.4 L476.4 348.6 L476.1 347.9 L475.8 347.2 L475.4 346.5 L474.9 345.9 L474.4 345.3 L473.8 344.7 L473.2 344.2 L472.6 343.8 L471.9 343.3 L471.2 343.0 L470.5 342.7 L469.8 342.5 L469.0 342.3 L468.2 342.2 L467.4 342.1 L466.6 342.0 L465.7 342.0 L464.9 342.1 L464.0 342.1 L463.1 342.3 L462.2 342.5 L461.2 342.7 L460.3 343.0 L459.3 343.4 L458.3 343.7 L457.4 344.2 L456.4 344.6 L455.4 345.1 L454.4 345.6 L453.4 346.1 L452.4 346.6 L451.4 347.2 L450.4 347.8 L449.3 348.4 L448.3 349.1 L447.3 349.8 L446.2 350.6 L445.2 351.4 L444.3 352.2 L443.4 353.1 L442.6 354.1 L441.8 355.0 L441.1 356.1 L440.4 357.1 L439.7 358.2 L439.2 359.3 L438.6 360.4 L438.1 361.4 L437.7 362.5 L437.3 363.5 L437.0 364.6 L436.8 365.6 L436.6 366.6 L436.5 367.7 L436.5 368.7 L436.5 369.6 L436.6 370.6 L436.7 371.5 L436.8 372.4 L437.1 373.3 L437.3 374.2 L437.6 375.0 L438.0 375.9 L438.4 376.7 L438.9 377.5 L439.4 378.3 L440.0 379.0 L440.7 379.7 L441.4 380.3 L442.2 380.8 L443.1 381.3 L443.9 381.6 L444.8 381.8 L445.8 382.0 L446.7 382.1 L447.7 382.1 L448.7 382.1 L449.7 382.0 L450.7 381.9 L451.7 381.7 L452.7 381.5 L453.8 381.2 L454.9 380.9 L456.0 380.4 L457.1 380.0 L458.3 379.5 L459.4 378.9 L460.5 378.4 L461.6 377.7 L462.6 377.1 L463.7 376.3 L464.8 375.4 L465.9 374.5 L467.0 373.5 L468.1 372.4 L469.1 371.4 L470.0 370.5 L470.9 369.7 L471.6 369.0 L472.1 368.4 L471.5 367.8 L470.9 368.3 L470.2 368.9 L469.3 369.7 L468.3 370.6 L467.3 371.5 L466.1 372.5 L465.0 373.4 L463.9 374.3 L462.8 375.1 L461.8 375.7 L460.8 376.3 L459.7 376.8 L458.6 377.3 L457.5 377.8 L456.4 378.2 L455.3 378.6 L454.3 378.9 L453.2 379.1 L452.2 379.3 L451.3 379.5 L450.4 379.5 L449.6 379.5 L448.7 379.5 L447.9 379.4 L447.1 379.3 L446.4 379.1 L445.7 378.9 L445.1 378.6 L444.6 378.3 L444.2 378.0 L443.8 377.6 L443.5 377.2 L443.3 376.7 L443.0 376.2 L442.8 375.6 L442.6 374.9 L442.5 374.3 L442.3 373.6 L442.2 372.9 L442.1 372.3 L442.1 371.7 L442.1 371.0 L442.1 370.4 L442.1 369.7 L442.2 369.0 L442.3 368.3 L442.4 367.6 L442.6 366.9 L442.8 366.2 L443.1 365.5 L443.3 364.7 L443.7 363.8 L444.1 363.0 L444.5 362.1 L445.0 361.2 L445.5 360.3 L446.1 359.4 L446.6 358.5 L447.2 357.7 L447.8 356.9 L448.4 356.1 L449.1 355.4 L449.8 354.6 L450.6 353.8 L451.4 353.0 L452.2 352.3 L453.0 351.5 L453.9 350.8 L454.7 350.1 L455.6 349.5 L456.4 348.9 L457.2 348.3 L458.1 347.8 L458.9 347.3 L459.8 346.8 L460.6 346.3 L461.4 345.9 L462.2 345.6 L463.0 345.3 L463.7 345.1 L464.4 345.0 L465.1 344.8 L465.8 344.8 L466.5 344.8 L467.2 344.8 L467.8 344.9 L468.4 345.0 L469.0 345.2 L469.5 345.4 L470.0 345.6 L470.4 345.9 L470.9 346.2 L471.3 346.5 L471.7 346.9 L472.0 347.3 L472.3 347.8 L472.6 348.2 L472.8 348.7 L472.9 349.0 L473.0 349.4 L473.0 349.7 L473.0 350.1 L472.9 350.5 L472.8 350.9 L472.6 351.4 L472.4 351.8 L472.2 352.3 L471.9 352.8 L471.6 353.3 L471.2 353.7 L470.8 354.2 L470.3 354.7 L469.8 355.2 L469.1 355.8 L468.5 356.4 L467.8 356.9 L467.0 357.5 L466.3 358.0 L465.7 358.5 L465.0 359.0 L464.4 359.5 L463.9 360.0 L463.3 360.4 L462.8 360.8 L462.4 361.1 L462.0 361.4 L461.6 361.7 L461.2 361.9 L460.9 362.0 L460.5 362.2 L460.1 362.2 L459.6 362.2 L458.9 362.1 L458.1 362.0 L457.3 361.7 L456.5 361.5 L455.7 361.2 L455.1 361.0 L454.5 360.8 L454.0 360.6Z" fill="#362c28"/><path d="M450.2 357.5 L450.1 357.7 L450.0 358.0 L449.8 358.4 L449.6 358.9 L449.4 359.3 L449.2 359.8 L449.1 360.3 L448.9 360.9 L448.8 361.4 L448.7 361.9 L448.6 362.4 L448.6 363.0 L448.7 363.6 L448.7 364.2 L448.8 364.7 L448.8 365.3 L448.9 365.8 L448.9 366.3 L449.0 366.7 L449.0 367.0 L449.4 367.0 L449.4 366.7 L449.5 366.3 L449.7 365.9 L449.8 365.4 L449.9 364.8 L450.1 364.3 L450.2 363.7 L450.3 363.1 L450.4 362.6 L450.5 362.1 L450.6 361.6 L450.6 361.1 L450.6 360.6 L450.6 360.1 L450.6 359.5 L450.6 359.0 L450.6 358.6 L450.6 358.2 L450.6 357.8 L450.6 357.5Z" fill="#362c28"/><path d="M508.1 347.7 L507.9 347.4 L507.8 347.0 L507.6 346.5 L507.4 345.9 L507.1 345.3 L506.8 344.6 L506.4 344.0 L505.9 343.4 L505.3 342.8 L504.7 342.4 L504.0 342.1 L503.3 341.8 L502.5 341.7 L501.7 341.5 L500.9 341.5 L500.0 341.5 L499.1 341.5 L498.2 341.7 L497.3 341.8 L496.4 342.0 L495.4 342.3 L494.5 342.6 L493.5 343.0 L492.4 343.4 L491.4 343.9 L490.3 344.4 L489.2 345.0 L488.1 345.7 L487.1 346.4 L486.1 347.2 L485.1 348.0 L484.1 349.0 L483.1 350.0 L482.1 351.0 L481.1 352.1 L480.2 353.2 L479.3 354.4 L478.5 355.5 L477.7 356.6 L476.9 357.7 L476.3 358.8 L475.6 359.9 L475.0 361.0 L474.4 362.2 L473.9 363.3 L473.4 364.4 L473.0 365.6 L472.6 366.7 L472.3 367.7 L472.0 368.8 L471.8 369.8 L471.7 370.9 L471.6 371.9 L471.5 372.9 L471.6 373.8 L471.7 374.8 L471.8 375.7 L472.0 376.5 L472.3 377.4 L472.7 378.2 L473.2 378.9 L473.8 379.5 L474.4 380.0 L475.1 380.4 L475.8 380.7 L476.5 380.9 L477.2 381.1 L477.9 381.2 L478.6 381.2 L479.3 381.2 L480.0 381.2 L480.7 381.2 L481.4 381.1 L482.2 380.9 L483.0 380.8 L483.8 380.6 L484.6 380.3 L485.4 380.0 L486.2 379.6 L487.1 379.2 L487.9 378.8 L488.7 378.3 L489.6 377.7 L490.4 377.1 L491.3 376.5 L492.2 375.8 L493.0 375.1 L493.9 374.3 L494.7 373.5 L495.5 372.7 L496.3 371.8 L497.1 370.8 L497.9 369.8 L498.7 368.7 L499.5 367.6 L500.2 366.5 L500.9 365.4 L501.6 364.3 L502.3 363.2 L502.9 362.2 L503.4 361.3 L503.9 360.3 L504.4 359.3 L504.9 358.3 L505.3 357.3 L505.7 356.4 L506.0 355.5 L506.3 354.7 L506.6 354.0 L506.8 353.2 L507.1 352.6 L507.2 352.0 L507.3 351.4 L507.4 350.9 L507.4 350.5 L507.4 350.1 L507.5 349.7 L507.5 349.4 L507.5 349.2 L507.5 349.0 L506.9 348.8 L506.8 349.1 L506.8 349.3 L506.7 349.6 L506.6 350.0 L506.5 350.3 L506.4 350.7 L506.2 351.2 L506.0 351.6 L505.8 352.2 L505.6 352.8 L505.3 353.4 L504.9 354.2 L504.6 355.0 L504.2 355.8 L503.8 356.7 L503.4 357.6 L502.9 358.5 L502.4 359.5 L501.9 360.4 L501.3 361.4 L500.8 362.3 L500.1 363.4 L499.5 364.4 L498.8 365.5 L498.0 366.6 L497.3 367.7 L496.5 368.7 L495.8 369.7 L495.0 370.7 L494.3 371.5 L493.5 372.3 L492.7 373.0 L491.9 373.7 L491.0 374.4 L490.2 375.0 L489.4 375.6 L488.5 376.1 L487.7 376.6 L486.9 377.0 L486.1 377.4 L485.4 377.7 L484.7 377.9 L483.9 378.1 L483.2 378.3 L482.5 378.4 L481.9 378.5 L481.2 378.5 L480.6 378.5 L480.1 378.5 L479.5 378.4 L479.0 378.2 L478.6 378.1 L478.2 377.9 L477.8 377.7 L477.5 377.4 L477.3 377.2 L477.1 376.9 L477.0 376.7 L476.9 376.5 L476.9 376.2 L476.9 375.9 L476.8 375.5 L476.8 375.0 L476.8 374.5 L476.9 373.8 L477.0 373.2 L477.1 372.5 L477.2 371.7 L477.4 371.0 L477.6 370.2 L477.8 369.4 L478.1 368.5 L478.5 367.6 L478.9 366.7 L479.3 365.7 L479.7 364.7 L480.2 363.7 L480.7 362.7 L481.3 361.7 L481.9 360.7 L482.5 359.7 L483.1 358.6 L483.8 357.5 L484.5 356.4 L485.3 355.4 L486.1 354.3 L486.8 353.3 L487.6 352.3 L488.4 351.4 L489.1 350.6 L489.9 349.9 L490.7 349.2 L491.5 348.6 L492.4 348.0 L493.3 347.4 L494.1 346.9 L495.0 346.4 L495.8 346.0 L496.7 345.7 L497.4 345.4 L498.1 345.1 L498.8 344.9 L499.5 344.8 L500.2 344.8 L500.8 344.7 L501.4 344.7 L502.0 344.8 L502.6 344.9 L503.1 344.9 L503.5 345.0 L503.9 345.1 L504.3 345.3 L504.8 345.6 L505.2 345.9 L505.7 346.3 L506.1 346.7 L506.6 347.1 L506.9 347.5 L507.3 347.9 L507.5 348.1Z" fill="#362c28"/><path d="M513.4 342.4 L513.4 342.8 L513.5 343.3 L513.7 343.8 L513.8 344.4 L513.9 345.0 L514.0 345.5 L513.9 346.1 L513.9 346.6 L513.7 347.0 L513.5 347.4 L513.3 348.0 L512.9 348.7 L512.4 349.5 L511.8 350.3 L511.2 351.3 L510.5 352.2 L509.8 353.2 L509.1 354.2 L508.4 355.2 L507.7 356.1 L507.0 357.0 L506.3 357.9 L505.5 358.8 L504.7 359.7 L503.9 360.6 L503.1 361.6 L502.3 362.5 L501.5 363.5 L500.7 364.4 L500.0 365.3 L499.4 366.2 L498.8 367.0 L498.1 367.9 L497.5 368.7 L496.9 369.6 L496.3 370.5 L495.7 371.3 L495.3 372.2 L494.9 373.2 L494.7 374.2 L494.6 375.1 L494.6 376.1 L494.8 377.0 L495.1 377.8 L495.5 378.5 L496.0 379.2 L496.5 379.8 L497.0 380.3 L497.6 380.7 L498.3 381.0 L499.0 381.3 L499.7 381.4 L500.4 381.5 L501.1 381.5 L501.9 381.4 L502.6 381.3 L503.3 381.2 L504.1 381.0 L504.8 380.8 L505.4 380.6 L506.1 380.4 L506.8 380.0 L507.6 379.7 L508.3 379.2 L509.0 378.8 L509.7 378.4 L510.3 378.0 L510.8 377.6 L511.3 377.3 L511.6 377.1 L511.2 376.3 L510.8 376.5 L510.3 376.7 L509.7 377.0 L509.1 377.4 L508.4 377.7 L507.7 378.0 L506.9 378.3 L506.2 378.6 L505.6 378.8 L505.0 379.0 L504.4 379.1 L503.7 379.1 L503.1 379.2 L502.4 379.2 L501.8 379.2 L501.2 379.1 L500.7 379.0 L500.3 378.9 L499.9 378.7 L499.7 378.6 L499.6 378.3 L499.4 378.0 L499.2 377.7 L499.1 377.3 L499.0 376.9 L498.9 376.6 L498.9 376.2 L499.0 375.9 L499.0 375.5 L499.1 375.2 L499.3 374.9 L499.6 374.4 L499.9 373.9 L500.4 373.2 L500.9 372.5 L501.5 371.8 L502.1 371.0 L502.8 370.2 L503.5 369.3 L504.2 368.5 L504.8 367.7 L505.5 366.8 L506.3 366.0 L507.1 365.0 L507.9 364.1 L508.8 363.2 L509.6 362.2 L510.4 361.2 L511.2 360.1 L511.9 359.1 L512.6 358.1 L513.3 357.1 L514.0 356.0 L514.6 354.9 L515.3 353.8 L515.9 352.7 L516.4 351.6 L516.9 350.5 L517.2 349.5 L517.5 348.4 L517.5 347.3 L517.4 346.3 L517.1 345.4 L516.7 344.6 L516.2 343.9 L515.7 343.4 L515.3 342.9 L514.9 342.5 L514.6 342.2 L514.4 342.0Z" fill="#362c28"/><path d="M501.4 349.4 L501.5 349.9 L501.6 350.6 L501.7 351.4 L501.8 352.3 L501.9 353.3 L502.0 354.3 L502.1 355.2 L502.1 356.1 L502.2 357.0 L502.2 357.6 L502.2 358.2 L502.2 358.8 L502.2 359.4 L502.2 360.0 L502.1 360.6 L502.1 361.1 L502.0 361.6 L502.0 362.0 L501.9 362.4 L501.9 362.7 L502.3 362.9 L502.4 362.6 L502.6 362.2 L502.8 361.8 L503.0 361.4 L503.3 360.9 L503.5 360.3 L503.7 359.7 L503.9 359.0 L504.0 358.3 L504.0 357.6 L503.9 356.8 L503.7 355.9 L503.5 355.0 L503.3 354.0 L503.0 353.1 L502.7 352.1 L502.4 351.3 L502.1 350.5 L501.9 349.9 L501.8 349.4Z" fill="#362c28"/><path d="M553.1 316.5 L552.9 317.0 L552.7 317.6 L552.5 318.2 L552.3 318.8 L552.0 319.4 L551.7 320.0 L551.3 320.5 L550.9 321.0 L550.4 321.6 L549.9 322.3 L549.2 323.1 L548.3 324.1 L547.3 325.3 L546.3 326.6 L545.1 328.0 L543.8 329.5 L542.4 331.2 L541.0 332.9 L539.5 334.7 L538.1 336.5 L536.5 338.5 L534.8 340.7 L532.9 343.0 L531.1 345.4 L529.1 347.8 L527.2 350.3 L525.4 352.7 L523.6 355.0 L522.0 357.1 L520.6 359.1 L519.3 360.8 L518.1 362.5 L516.9 364.1 L515.8 365.6 L514.8 367.1 L513.8 368.5 L513.0 369.9 L512.3 371.3 L511.7 372.7 L511.2 374.1 L511.0 375.6 L511.1 377.0 L511.5 378.3 L512.1 379.5 L512.8 380.5 L513.8 381.3 L514.8 381.9 L515.9 382.3 L517.0 382.6 L518.1 382.6 L519.4 382.4 L520.6 382.1 L521.8 381.6 L523.1 381.0 L524.4 380.3 L525.7 379.6 L527.1 378.8 L528.3 378.1 L529.5 377.4 L530.6 376.8 L531.7 376.2 L532.8 375.5 L533.9 374.8 L535.0 374.1 L536.0 373.4 L537.0 372.7 L537.9 372.0 L538.7 371.5 L539.4 371.0 L539.9 370.6 L539.5 370.0 L538.9 370.3 L538.2 370.6 L537.3 371.1 L536.3 371.6 L535.3 372.1 L534.2 372.7 L533.0 373.3 L531.9 373.8 L530.7 374.3 L529.6 374.8 L528.4 375.3 L527.2 375.8 L525.8 376.4 L524.5 377.0 L523.2 377.5 L521.9 378.0 L520.7 378.3 L519.6 378.6 L518.8 378.7 L518.3 378.6 L517.9 378.4 L517.5 378.2 L517.3 377.9 L517.1 377.6 L517.0 377.4 L517.0 377.1 L517.0 376.8 L517.1 376.6 L517.2 376.3 L517.4 375.9 L517.7 375.4 L518.2 374.6 L518.8 373.7 L519.7 372.7 L520.6 371.5 L521.7 370.2 L523.0 368.8 L524.2 367.3 L525.6 365.7 L527.0 363.9 L528.5 362.0 L530.1 359.9 L531.8 357.7 L533.7 355.3 L535.6 352.8 L537.5 350.4 L539.3 348.0 L541.1 345.6 L542.8 343.5 L544.3 341.5 L545.8 339.7 L547.2 337.9 L548.6 336.3 L549.9 334.7 L551.2 333.1 L552.4 331.6 L553.5 330.1 L554.5 328.7 L555.4 327.2 L556.1 325.7 L556.7 324.2 L556.9 322.8 L556.9 321.4 L556.7 320.2 L556.4 319.2 L556.0 318.4 L555.5 317.7 L555.2 317.2 L554.9 316.9 L554.7 316.5Z" fill="#362c28"/><path d="M474.4 336.3 L475.1 336.0 L476.0 335.5 L477.1 334.9 L478.3 334.3 L479.6 333.6 L480.9 333.0 L482.3 332.3 L483.7 331.7 L485.1 331.2 L486.5 330.8 L487.8 330.5 L489.3 330.2 L490.7 329.9 L492.2 329.7 L493.7 329.5 L495.3 329.3 L497.0 329.2 L498.7 329.1 L500.4 329.1 L502.2 329.1 L504.1 329.1 L506.0 329.2 L508.0 329.3 L510.1 329.5 L512.2 329.7 L514.4 330.0 L516.6 330.2 L518.9 330.5 L521.1 330.8 L523.4 331.1 L525.7 331.4 L528.0 331.8 L530.5 332.3 L532.9 332.7 L535.4 333.2 L537.9 333.6 L540.3 334.0 L542.8 334.4 L545.2 334.7 L547.5 335.0 L549.8 335.1 L552.2 335.2 L554.6 335.2 L557.0 335.2 L559.4 335.1 L561.6 335.0 L563.6 335.0 L565.4 334.9 L567.0 334.8 L568.2 334.8 L568.2 334.4 L567.0 334.3 L565.5 334.2 L563.6 334.1 L561.6 333.9 L559.4 333.8 L557.1 333.6 L554.7 333.4 L552.3 333.2 L550.0 332.9 L547.7 332.6 L545.5 332.3 L543.2 331.9 L540.8 331.5 L538.4 331.0 L535.9 330.5 L533.4 330.0 L531.0 329.5 L528.5 329.1 L526.1 328.7 L523.8 328.3 L521.5 327.9 L519.3 327.6 L517.0 327.3 L514.8 327.0 L512.6 326.7 L510.4 326.4 L508.3 326.2 L506.2 326.1 L504.2 326.0 L502.2 325.9 L500.3 326.0 L498.5 326.1 L496.7 326.2 L495.0 326.4 L493.4 326.6 L491.7 326.9 L490.2 327.3 L488.7 327.7 L487.2 328.1 L485.7 328.6 L484.3 329.2 L482.9 329.9 L481.5 330.7 L480.1 331.6 L478.8 332.4 L477.7 333.3 L476.6 334.1 L475.6 334.8 L474.8 335.4 L474.2 335.9Z" fill="#362c28"/><path d="M554.3 330.2 L554.5 330.3 L554.7 330.6 L555.0 330.8 L555.3 331.1 L555.7 331.5 L556.0 331.8 L556.4 332.1 L556.8 332.5 L557.3 332.7 L557.7 333.0 L558.1 333.2 L558.6 333.4 L559.0 333.5 L559.5 333.7 L560.0 333.8 L560.4 333.9 L560.8 333.9 L561.2 334.0 L561.5 334.1 L561.8 334.1 L562.2 333.5 L562.1 333.3 L562.0 333.0 L561.8 332.7 L561.6 332.3 L561.4 331.9 L561.2 331.5 L560.9 331.1 L560.7 330.7 L560.5 330.3 L560.3 330.0 L560.1 329.7 L559.9 329.3 L559.6 329.0 L559.3 328.6 L559.0 328.3 L558.7 327.9 L558.4 327.6 L558.1 327.3 L557.9 327.0 L557.7 326.8Z" fill="#362c28"/><path d="M544.3 337.3 L544.6 337.5 L545.0 337.7 L545.4 338.0 L546.0 338.3 L546.6 338.7 L547.2 339.0 L547.9 339.3 L548.6 339.5 L549.4 339.6 L550.2 339.7 L550.9 339.5 L551.7 339.3 L552.5 338.9 L553.2 338.5 L553.9 338.1 L554.6 337.6 L555.2 337.2 L555.7 336.8 L556.1 336.6 L556.5 336.4 L555.5 334.6 L555.1 334.8 L554.6 335.1 L554.1 335.4 L553.4 335.8 L552.8 336.1 L552.1 336.5 L551.5 336.8 L550.8 337.0 L550.3 337.2 L549.8 337.3 L549.4 337.4 L548.9 337.4 L548.3 337.4 L547.7 337.3 L547.1 337.2 L546.5 337.1 L545.9 337.0 L545.3 336.9 L544.9 336.8 L544.5 336.7Z" fill="#362c28"/><path d="M529.4 360.2 L529.9 360.0 L530.4 359.8 L531.0 359.6 L531.7 359.3 L532.4 359.0 L533.3 358.6 L534.2 358.1 L535.2 357.6 L536.3 356.9 L537.5 356.1 L538.8 355.2 L540.3 354.0 L542.0 352.6 L543.8 351.2 L545.6 349.7 L547.4 348.2 L549.0 346.8 L550.5 345.6 L551.8 344.6 L552.7 343.8 L551.9 342.8 L550.9 343.5 L549.7 344.6 L548.2 345.8 L546.5 347.1 L544.7 348.5 L542.8 350.0 L541.0 351.4 L539.3 352.7 L537.8 353.9 L536.5 354.9 L535.5 355.7 L534.5 356.4 L533.6 357.0 L532.7 357.6 L531.9 358.0 L531.3 358.5 L530.6 358.9 L530.1 359.2 L529.6 359.5 L529.2 359.8Z" fill="#362c28"/><path d="M551.6 342.9 L551.3 343.2 L550.9 343.5 L550.4 343.9 L549.9 344.3 L549.4 344.7 L548.8 345.1 L548.2 345.6 L547.6 346.1 L547.1 346.5 L546.5 347.0 L545.9 347.5 L545.3 348.1 L544.6 348.7 L543.8 349.4 L543.0 350.1 L542.1 351.0 L541.2 352.0 L540.2 353.0 L539.2 354.2 L538.3 355.5 L537.3 356.9 L536.3 358.4 L535.1 360.1 L534.0 361.9 L532.8 363.8 L531.7 365.6 L530.7 367.5 L529.9 369.2 L529.2 370.9 L528.7 372.4 L528.4 373.8 L528.3 375.2 L528.5 376.5 L528.8 377.7 L529.4 378.8 L530.1 379.7 L530.9 380.4 L531.8 380.9 L532.7 381.3 L533.6 381.5 L534.7 381.6 L535.8 381.5 L537.0 381.3 L538.1 380.9 L539.3 380.6 L540.5 380.1 L541.7 379.7 L542.8 379.2 L543.9 378.7 L544.8 378.3 L545.6 377.8 L546.5 377.2 L547.2 376.6 L548.0 375.9 L548.6 375.3 L549.2 374.7 L549.8 374.1 L550.3 373.6 L550.7 373.2 L551.0 372.8 L550.6 372.4 L550.2 372.6 L549.7 373.0 L549.2 373.4 L548.5 373.9 L547.9 374.4 L547.1 374.9 L546.4 375.4 L545.6 375.8 L544.8 376.2 L544.0 376.5 L543.1 376.8 L542.1 377.1 L541.0 377.5 L539.8 377.8 L538.7 378.0 L537.5 378.2 L536.5 378.4 L535.6 378.4 L535.0 378.3 L534.6 378.1 L534.3 377.9 L534.1 377.6 L534.0 377.3 L533.9 377.0 L533.9 376.7 L534.0 376.4 L534.1 376.1 L534.3 375.6 L534.5 375.1 L534.7 374.4 L535.2 373.5 L535.9 372.3 L536.7 370.8 L537.7 369.2 L538.8 367.5 L539.9 365.8 L541.1 364.1 L542.2 362.5 L543.2 361.0 L544.1 359.7 L544.9 358.7 L545.7 357.7 L546.5 356.8 L547.2 356.0 L548.0 355.2 L548.8 354.4 L549.5 353.6 L550.2 352.8 L550.9 351.9 L551.5 351.0 L552.0 350.0 L552.4 349.1 L552.6 348.2 L552.8 347.3 L552.9 346.5 L552.9 345.8 L553.0 345.1 L553.0 344.5 L553.0 344.1 L553.0 343.7Z" fill="#362c28"/><path d="M569.1 339.7 L568.7 340.0 L568.3 340.4 L567.8 340.9 L567.2 341.4 L566.5 341.9 L565.9 342.5 L565.2 343.2 L564.5 343.9 L563.8 344.7 L563.2 345.5 L562.6 346.2 L562.0 347.1 L561.4 348.0 L560.8 348.9 L560.2 350.0 L559.5 351.1 L558.9 352.2 L558.2 353.5 L557.6 354.8 L557.0 356.2 L556.4 357.6 L555.7 359.2 L555.0 360.9 L554.3 362.7 L553.6 364.5 L553.0 366.3 L552.4 368.1 L552.0 369.9 L551.6 371.6 L551.5 373.1 L551.6 374.6 L551.9 375.9 L552.3 377.1 L552.9 378.2 L553.6 379.1 L554.5 379.9 L555.4 380.5 L556.3 381.0 L557.3 381.3 L558.3 381.5 L559.3 381.6 L560.4 381.7 L561.6 381.6 L562.9 381.5 L564.2 381.2 L565.5 380.9 L566.8 380.5 L568.2 380.0 L569.5 379.4 L570.7 378.7 L571.9 377.9 L573.1 376.9 L574.2 375.9 L575.4 374.8 L576.5 373.5 L577.6 372.3 L578.7 371.0 L579.7 369.6 L580.8 368.2 L581.8 366.9 L582.8 365.4 L583.7 363.9 L584.7 362.4 L585.7 360.7 L586.6 359.1 L587.5 357.5 L588.3 355.8 L589.1 354.1 L589.9 352.5 L590.6 350.9 L591.2 349.3 L591.8 347.7 L592.3 346.1 L592.8 344.5 L593.2 342.9 L593.6 341.4 L594.0 339.9 L594.3 338.4 L594.6 337.0 L594.8 335.6 L595.0 334.3 L595.2 332.9 L595.3 331.6 L595.3 330.3 L595.4 329.1 L595.4 328.0 L595.3 326.9 L595.3 326.0 L595.3 325.2 L595.3 324.6 L594.1 324.4 L593.8 325.0 L593.6 325.7 L593.2 326.6 L592.9 327.5 L592.5 328.6 L592.0 329.7 L591.6 330.8 L591.1 332.0 L590.7 333.2 L590.2 334.4 L589.7 335.6 L589.2 336.9 L588.7 338.3 L588.2 339.7 L587.6 341.1 L587.0 342.6 L586.5 344.0 L585.9 345.5 L585.3 347.0 L584.6 348.5 L584.0 350.0 L583.3 351.6 L582.7 353.2 L581.9 354.8 L581.2 356.4 L580.5 358.1 L579.7 359.7 L579.0 361.2 L578.2 362.7 L577.4 364.1 L576.6 365.5 L575.8 367.0 L575.0 368.4 L574.1 369.7 L573.3 371.0 L572.4 372.3 L571.6 373.4 L570.7 374.4 L569.8 375.3 L568.9 376.1 L568.0 376.7 L566.9 377.2 L565.8 377.7 L564.7 378.0 L563.6 378.2 L562.5 378.4 L561.5 378.4 L560.5 378.4 L559.7 378.3 L559.1 378.1 L558.7 377.8 L558.3 377.5 L558.0 377.1 L557.8 376.8 L557.7 376.4 L557.7 375.9 L557.7 375.5 L557.7 375.0 L557.8 374.4 L557.9 373.7 L558.1 372.8 L558.4 371.6 L558.9 370.2 L559.5 368.7 L560.2 367.0 L560.9 365.3 L561.6 363.6 L562.3 362.0 L563.0 360.4 L563.6 359.0 L564.1 357.8 L564.7 356.7 L565.2 355.6 L565.8 354.5 L566.4 353.5 L566.9 352.5 L567.4 351.5 L567.9 350.5 L568.4 349.5 L568.8 348.5 L569.1 347.6 L569.4 346.6 L569.6 345.7 L569.8 344.7 L570.0 343.8 L570.1 343.0 L570.2 342.2 L570.3 341.5 L570.4 341.0 L570.5 340.5Z" fill="#362c28"/><path d="M588.6 336.4 L589.1 336.1 L589.6 335.7 L590.2 335.2 L590.9 334.6 L591.7 334.1 L592.6 333.5 L593.6 333.0 L594.7 332.5 L596.0 332.0 L597.4 331.6 L599.1 331.2 L601.0 330.8 L603.0 330.5 L605.2 330.1 L607.5 329.7 L610.0 329.5 L612.4 329.2 L615.0 329.0 L617.5 329.0 L620.0 329.0 L622.5 329.1 L625.2 329.3 L628.0 329.7 L630.9 330.1 L633.8 330.5 L636.8 331.0 L639.7 331.5 L642.6 331.9 L645.3 332.4 L647.9 332.7 L650.5 333.0 L652.9 333.2 L655.4 333.5 L657.7 333.7 L660.0 333.9 L662.3 334.1 L664.4 334.2 L666.4 334.4 L668.3 334.5 L670.1 334.6 L671.8 334.7 L673.4 334.8 L674.9 334.8 L676.3 334.9 L677.6 334.9 L678.8 334.9 L679.8 334.9 L680.8 334.9 L681.6 334.9 L682.3 334.9 L682.3 334.5 L681.6 334.4 L680.8 334.2 L679.9 334.1 L678.9 333.9 L677.7 333.7 L676.4 333.5 L675.0 333.2 L673.5 333.0 L672.0 332.8 L670.3 332.6 L668.5 332.3 L666.6 332.1 L664.6 331.9 L662.5 331.7 L660.3 331.5 L658.0 331.2 L655.6 331.0 L653.2 330.7 L650.7 330.4 L648.3 330.1 L645.7 329.7 L643.0 329.3 L640.2 328.7 L637.3 328.2 L634.4 327.6 L631.4 327.1 L628.4 326.6 L625.6 326.2 L622.7 326.0 L620.0 325.8 L617.4 325.9 L614.8 326.0 L612.2 326.3 L609.6 326.6 L607.1 327.1 L604.8 327.5 L602.5 328.0 L600.4 328.5 L598.5 329.1 L596.8 329.6 L595.3 330.2 L593.9 330.9 L592.8 331.6 L591.8 332.4 L590.9 333.1 L590.2 333.9 L589.6 334.5 L589.1 335.1 L588.7 335.6 L588.2 336.0Z" fill="#362c28"/><path d="M628.4 346.4 L627.6 346.2 L626.7 345.9 L625.5 345.4 L624.1 345.0 L622.7 344.5 L621.1 344.0 L619.6 343.6 L618.0 343.3 L616.4 343.1 L614.9 343.1 L613.4 343.3 L611.9 343.6 L610.4 344.1 L609.0 344.6 L607.6 345.2 L606.2 345.9 L604.8 346.6 L603.5 347.3 L602.3 348.1 L601.2 348.8 L600.2 349.6 L599.2 350.4 L598.2 351.3 L597.4 352.2 L596.6 353.1 L595.8 354.1 L595.1 355.1 L594.5 356.2 L593.8 357.3 L593.2 358.5 L592.5 359.9 L591.8 361.4 L591.0 363.1 L590.3 364.9 L589.6 366.8 L589.0 368.6 L588.4 370.4 L588.0 372.2 L587.8 373.9 L587.7 375.5 L587.9 376.9 L588.3 378.3 L588.9 379.5 L589.7 380.6 L590.7 381.5 L591.7 382.1 L592.9 382.6 L594.0 382.9 L595.2 383.0 L596.4 383.0 L597.7 382.8 L599.0 382.5 L600.3 382.0 L601.7 381.5 L603.2 380.8 L604.6 380.1 L606.1 379.3 L607.6 378.4 L609.0 377.5 L610.3 376.5 L611.6 375.4 L612.9 374.2 L614.3 372.9 L615.6 371.5 L616.9 370.1 L618.1 368.6 L619.3 367.2 L620.5 365.7 L621.5 364.2 L622.5 362.8 L623.4 361.4 L624.2 359.9 L625.0 358.3 L625.7 356.7 L626.4 355.2 L627.0 353.7 L627.5 352.3 L628.0 351.1 L628.4 350.1 L628.7 349.3 L627.9 348.9 L627.5 349.7 L627.0 350.7 L626.4 351.9 L625.8 353.2 L625.1 354.6 L624.4 356.1 L623.6 357.5 L622.7 359.0 L621.8 360.4 L620.9 361.8 L619.9 363.1 L618.8 364.4 L617.7 365.9 L616.5 367.3 L615.3 368.7 L614.0 370.0 L612.7 371.3 L611.4 372.5 L610.1 373.6 L608.9 374.5 L607.6 375.4 L606.2 376.1 L604.8 376.8 L603.4 377.5 L602.0 378.0 L600.6 378.4 L599.3 378.8 L598.2 379.0 L597.2 379.0 L596.4 379.0 L595.8 378.9 L595.2 378.6 L594.8 378.3 L594.5 378.0 L594.3 377.7 L594.2 377.3 L594.1 376.9 L594.0 376.5 L594.0 376.1 L594.1 375.5 L594.2 374.8 L594.5 373.7 L595.0 372.4 L595.5 370.9 L596.2 369.3 L596.9 367.6 L597.6 366.0 L598.3 364.4 L599.0 363.0 L599.6 361.7 L600.2 360.5 L600.7 359.5 L601.1 358.6 L601.6 357.7 L602.0 356.9 L602.4 356.1 L602.9 355.4 L603.5 354.6 L604.1 353.9 L604.8 353.2 L605.6 352.4 L606.6 351.5 L607.6 350.7 L608.6 349.9 L609.7 349.1 L610.8 348.4 L612.0 347.7 L613.1 347.1 L614.3 346.6 L615.3 346.3 L616.5 346.1 L617.8 346.0 L619.2 346.0 L620.7 346.1 L622.2 346.3 L623.7 346.6 L625.1 346.8 L626.3 347.1 L627.4 347.3 L628.2 347.4Z" fill="#362c28"/><path d="M628.5 343.4 L628.2 343.6 L627.8 343.9 L627.3 344.2 L626.8 344.6 L626.2 345.1 L625.6 345.6 L624.9 346.2 L624.3 347.0 L623.6 347.8 L623.1 348.7 L622.5 349.8 L622.0 350.9 L621.5 352.0 L621.1 353.2 L620.6 354.5 L620.2 355.8 L619.7 357.1 L619.2 358.4 L618.8 359.8 L618.3 361.0 L617.8 362.3 L617.2 363.8 L616.6 365.3 L615.9 366.9 L615.2 368.6 L614.6 370.2 L614.0 371.8 L613.6 373.3 L613.2 374.8 L613.0 376.2 L613.1 377.4 L613.2 378.6 L613.6 379.7 L614.2 380.7 L614.9 381.5 L615.8 382.1 L616.8 382.5 L617.7 382.7 L618.6 382.7 L619.6 382.6 L620.6 382.3 L621.8 381.9 L623.0 381.3 L624.3 380.7 L625.6 380.0 L626.9 379.3 L628.1 378.6 L629.2 378.0 L630.1 377.5 L630.8 377.2 L630.2 376.0 L629.5 376.3 L628.6 376.7 L627.4 377.1 L626.1 377.6 L624.8 378.1 L623.4 378.6 L622.1 379.0 L621.0 379.3 L620.0 379.5 L619.4 379.4 L619.0 379.2 L618.7 379.0 L618.6 378.8 L618.6 378.6 L618.7 378.4 L618.9 378.3 L619.0 378.2 L619.1 377.9 L619.2 377.5 L619.4 377.0 L619.6 376.3 L620.0 375.4 L620.5 374.2 L621.1 372.8 L621.7 371.3 L622.4 369.8 L623.1 368.2 L623.8 366.6 L624.5 365.0 L625.1 363.6 L625.6 362.2 L626.1 360.8 L626.5 359.4 L626.9 358.1 L627.3 356.7 L627.7 355.5 L628.1 354.3 L628.4 353.2 L628.7 352.2 L628.9 351.3 L629.2 350.4 L629.4 349.6 L629.5 348.9 L629.7 348.1 L629.8 347.4 L630.0 346.7 L630.1 346.1 L630.3 345.6 L630.4 345.0 L630.5 344.6Z" fill="#362c28"/><path d="M665.0 316.7 L665.0 317.3 L665.0 318.0 L665.0 318.8 L665.0 319.6 L664.8 320.4 L664.7 321.1 L664.4 321.9 L664.1 322.7 L663.7 323.6 L663.1 324.8 L662.4 326.3 L661.4 328.1 L660.3 330.2 L659.0 332.4 L657.7 334.8 L656.3 337.3 L654.8 339.8 L653.3 342.2 L651.8 344.6 L650.4 346.9 L648.9 349.1 L647.2 351.4 L645.5 353.8 L643.6 356.2 L641.8 358.6 L640.0 360.9 L638.3 363.1 L636.7 365.3 L635.3 367.3 L634.1 369.0 L633.2 370.6 L632.4 372.0 L631.8 373.2 L631.2 374.3 L630.8 375.4 L630.4 376.4 L630.2 377.4 L630.1 378.5 L630.1 379.5 L630.4 380.5 L630.8 381.5 L631.5 382.4 L632.3 383.1 L633.2 383.6 L634.2 383.9 L635.2 384.1 L636.3 384.2 L637.4 384.1 L638.5 384.0 L639.7 383.7 L641.0 383.2 L642.4 382.5 L644.0 381.7 L645.7 380.8 L647.3 379.8 L649.0 378.8 L650.5 377.9 L651.9 377.0 L653.0 376.4 L653.9 375.9 L653.5 375.1 L652.6 375.5 L651.4 376.0 L649.9 376.7 L648.2 377.4 L646.5 378.1 L644.7 378.8 L643.0 379.4 L641.4 380.0 L640.0 380.3 L638.9 380.5 L638.1 380.6 L637.3 380.6 L636.5 380.5 L635.9 380.3 L635.5 380.1 L635.1 379.9 L634.9 379.7 L634.9 379.6 L634.9 379.5 L635.0 379.5 L635.1 379.4 L635.3 379.3 L635.5 379.1 L635.7 378.7 L636.1 378.2 L636.7 377.5 L637.3 376.7 L638.1 375.7 L639.0 374.5 L640.1 373.2 L641.2 371.6 L642.7 369.8 L644.3 367.8 L646.1 365.7 L647.9 363.4 L649.9 361.0 L651.8 358.6 L653.6 356.1 L655.4 353.7 L657.0 351.3 L658.6 348.9 L660.1 346.4 L661.7 343.9 L663.2 341.3 L664.7 338.7 L666.0 336.2 L667.3 333.8 L668.3 331.4 L669.2 329.3 L669.9 327.2 L670.3 325.3 L670.3 323.4 L670.1 321.8 L669.6 320.4 L669.1 319.2 L668.4 318.3 L667.8 317.7 L667.2 317.1 L666.8 316.7 L666.6 316.3Z" fill="#362c28"/><path d="M635.0 360.3 L635.5 360.2 L636.1 360.0 L636.8 359.9 L637.6 359.8 L638.5 359.6 L639.4 359.4 L640.4 359.3 L641.3 359.1 L642.2 358.9 L643.1 358.8 L644.1 358.6 L645.1 358.4 L646.2 358.3 L647.3 358.1 L648.4 357.9 L649.4 357.7 L650.4 357.6 L651.3 357.4 L652.1 357.3 L652.6 357.2 L652.6 356.4 L652.0 356.5 L651.2 356.5 L650.3 356.5 L649.3 356.6 L648.2 356.7 L647.1 356.7 L646.0 356.8 L644.9 356.9 L643.8 357.1 L642.9 357.2 L641.9 357.4 L641.0 357.7 L640.0 357.9 L639.1 358.2 L638.2 358.5 L637.4 358.8 L636.6 359.1 L635.9 359.4 L635.3 359.6 L634.8 359.7Z" fill="#362c28"/><path d="M664.0 343.3 L663.6 343.7 L663.3 344.2 L662.9 344.7 L662.4 345.2 L661.9 345.8 L661.3 346.5 L660.7 347.1 L660.1 347.9 L659.4 348.7 L658.7 349.6 L657.8 350.7 L656.8 352.0 L655.6 353.4 L654.3 355.0 L653.0 356.7 L651.7 358.4 L650.4 360.1 L649.2 361.7 L648.2 363.3 L647.2 364.8 L646.5 366.1 L645.8 367.4 L645.2 368.6 L644.7 369.8 L644.2 371.0 L643.9 372.2 L643.6 373.3 L643.4 374.5 L643.3 375.6 L643.4 376.8 L643.7 377.9 L644.2 378.9 L644.7 379.9 L645.5 380.7 L646.3 381.4 L647.2 382.0 L648.2 382.4 L649.3 382.7 L650.5 382.7 L651.7 382.6 L653.0 382.2 L654.4 381.5 L655.8 380.7 L657.4 379.8 L658.9 378.8 L660.4 377.8 L661.8 376.8 L663.1 376.0 L664.1 375.3 L664.9 374.8 L664.5 374.0 L663.6 374.4 L662.5 375.0 L661.1 375.7 L659.6 376.4 L658.0 377.2 L656.4 377.9 L654.8 378.5 L653.3 379.0 L652.1 379.3 L651.3 379.4 L650.7 379.3 L650.2 379.2 L649.7 378.9 L649.3 378.6 L649.0 378.3 L648.8 377.9 L648.6 377.5 L648.5 377.1 L648.5 376.7 L648.6 376.4 L648.7 376.1 L648.8 375.6 L649.1 375.1 L649.5 374.4 L650.0 373.7 L650.5 372.8 L651.2 371.9 L651.9 370.9 L652.6 369.8 L653.4 368.6 L654.2 367.4 L655.2 366.0 L656.3 364.4 L657.5 362.8 L658.8 361.0 L660.0 359.3 L661.2 357.6 L662.4 356.0 L663.3 354.4 L664.1 353.0 L664.7 351.7 L665.1 350.4 L665.4 349.2 L665.5 348.1 L665.6 347.2 L665.6 346.3 L665.5 345.5 L665.5 344.9 L665.4 344.3 L665.4 343.9Z" fill="#362c28"/><path d="M667.3 330.7 L667.4 330.8 L667.6 331.0 L667.9 331.3 L668.2 331.6 L668.6 331.9 L669.0 332.3 L669.4 332.7 L669.9 333.0 L670.4 333.3 L670.9 333.6 L671.5 333.8 L672.0 333.9 L672.6 334.0 L673.1 334.0 L673.6 334.0 L674.1 334.0 L674.6 334.0 L675.0 333.9 L675.3 333.9 L675.6 333.9 L675.8 333.3 L675.6 333.1 L675.4 332.9 L675.1 332.6 L674.8 332.3 L674.4 332.0 L674.1 331.6 L673.8 331.3 L673.5 331.0 L673.3 330.7 L673.1 330.4 L672.9 330.2 L672.7 329.9 L672.5 329.6 L672.2 329.2 L671.9 328.9 L671.7 328.5 L671.4 328.2 L671.2 327.9 L670.9 327.6 L670.7 327.3Z" fill="#362c28"/><path d="M657.0 338.3 L657.4 338.4 L657.9 338.6 L658.5 338.8 L659.2 339.0 L660.0 339.2 L660.8 339.4 L661.7 339.6 L662.5 339.7 L663.4 339.7 L664.2 339.7 L665.0 339.5 L665.8 339.2 L666.5 338.9 L667.3 338.5 L668.0 338.1 L668.6 337.7 L669.2 337.3 L669.7 337.0 L670.1 336.7 L670.5 336.5 L669.9 335.3 L669.5 335.5 L669.0 335.6 L668.5 335.9 L667.8 336.1 L667.1 336.4 L666.4 336.6 L665.7 336.8 L665.0 337.1 L664.4 337.2 L663.8 337.3 L663.2 337.4 L662.5 337.5 L661.8 337.6 L661.0 337.6 L660.2 337.6 L659.4 337.7 L658.7 337.7 L658.0 337.7 L657.5 337.7 L657.0 337.7Z" fill="#362c28"/><path d="M691.9 354.7 L692.1 355.2 L692.3 355.9 L692.6 356.8 L692.9 357.7 L693.3 358.7 L693.6 359.7 L693.9 360.6 L694.2 361.5 L694.4 362.2 L694.6 362.7 L696.4 361.9 L696.1 361.4 L695.8 360.8 L695.4 360.0 L694.9 359.1 L694.4 358.2 L694.0 357.3 L693.5 356.4 L693.1 355.6 L692.7 354.9 L692.5 354.5Z" fill="#362c28"/><path d="M701.7 354.1 L701.2 353.4 L700.6 352.4 L699.9 351.1 L699.2 349.7 L698.3 348.2 L697.3 346.7 L696.3 345.3 L695.2 344.0 L694.0 342.9 L692.6 342.2 L691.1 341.9 L689.6 341.8 L688.0 341.9 L686.4 342.2 L684.8 342.7 L683.1 343.3 L681.5 344.1 L679.9 345.0 L678.4 346.0 L677.0 347.1 L675.6 348.5 L674.3 350.1 L673.0 351.9 L671.8 353.8 L670.6 355.7 L669.6 357.6 L668.6 359.5 L667.8 361.2 L667.0 362.8 L666.4 364.2 L666.0 365.5 L665.6 366.6 L665.4 367.7 L665.3 368.9 L665.3 370.0 L665.5 371.1 L665.8 372.1 L666.1 372.9 L666.5 373.7 L666.9 374.4 L667.3 375.2 L667.8 376.2 L668.4 377.3 L669.1 378.4 L670.0 379.6 L670.9 380.7 L672.1 381.8 L673.4 382.7 L675.0 383.2 L676.7 383.4 L678.3 383.2 L680.0 382.7 L681.6 382.0 L683.4 381.2 L685.1 380.3 L686.9 379.2 L688.6 378.1 L690.2 376.8 L691.7 375.5 L693.1 374.1 L694.3 372.6 L695.5 370.9 L696.6 369.1 L697.6 367.2 L698.6 365.2 L699.5 363.2 L700.3 361.3 L701.0 359.4 L701.5 357.7 L701.9 356.2 L702.1 354.8 L702.1 353.5 L701.9 352.3 L701.6 351.2 L701.2 350.2 L700.7 349.3 L700.3 348.5 L699.9 347.9 L699.6 347.3 L699.4 346.9 L698.6 347.1 L698.8 347.7 L699.0 348.3 L699.3 349.0 L699.6 349.8 L699.9 350.7 L700.2 351.6 L700.3 352.5 L700.4 353.6 L700.3 354.6 L700.1 355.8 L699.6 357.1 L699.1 358.7 L698.4 360.5 L697.6 362.4 L696.7 364.3 L695.8 366.2 L694.7 368.0 L693.6 369.7 L692.5 371.2 L691.3 372.5 L690.1 373.6 L688.6 374.6 L687.0 375.6 L685.3 376.4 L683.6 377.2 L681.9 377.8 L680.3 378.2 L678.9 378.5 L677.7 378.7 L676.9 378.6 L676.5 378.4 L676.2 378.1 L675.9 377.7 L675.5 377.1 L675.1 376.3 L674.7 375.4 L674.4 374.4 L674.1 373.5 L673.8 372.5 L673.5 371.6 L673.3 370.9 L673.2 370.3 L673.1 370.0 L673.1 369.8 L673.2 369.7 L673.2 369.5 L673.3 369.2 L673.4 368.7 L673.6 368.0 L674.0 367.0 L674.4 365.7 L674.9 364.2 L675.5 362.5 L676.2 360.6 L676.9 358.8 L677.7 356.9 L678.5 355.2 L679.4 353.6 L680.2 352.2 L681.0 351.1 L681.9 350.1 L682.9 349.1 L684.0 348.1 L685.2 347.3 L686.4 346.5 L687.6 345.9 L688.8 345.4 L689.9 345.1 L691.0 345.0 L691.8 345.0 L692.6 345.2 L693.5 345.8 L694.5 346.8 L695.6 348.0 L696.6 349.3 L697.5 350.7 L698.3 352.1 L699.1 353.3 L699.8 354.3 L700.3 355.1Z" fill="#362c28"/><path d="M711.2 342.4 L711.0 342.9 L710.8 343.4 L710.6 344.0 L710.3 344.6 L710.0 345.3 L709.7 346.0 L709.3 346.6 L708.9 347.4 L708.5 348.1 L708.0 348.9 L707.5 349.8 L706.8 350.9 L706.1 352.0 L705.4 353.3 L704.5 354.7 L703.7 356.1 L702.8 357.6 L702.0 359.2 L701.2 360.7 L700.4 362.3 L699.6 363.9 L698.9 365.5 L698.2 367.2 L697.4 369.0 L696.7 370.7 L696.1 372.4 L695.4 374.1 L694.8 375.6 L694.2 377.1 L693.7 378.5 L693.2 379.8 L692.8 381.0 L692.4 382.3 L692.0 383.4 L691.6 384.5 L691.3 385.6 L691.0 386.5 L690.7 387.5 L690.5 388.3 L690.2 389.0 L690.1 389.7 L690.0 390.2 L689.9 390.7 L689.8 391.1 L689.8 391.5 L689.8 391.8 L689.8 392.1 L689.7 392.3 L689.7 392.6 L689.7 392.8 L690.3 393.2 L690.5 393.2 L690.7 393.1 L690.9 393.0 L691.2 392.9 L691.6 392.8 L691.9 392.6 L692.3 392.3 L692.8 392.0 L693.3 391.5 L693.8 391.0 L694.3 390.3 L694.8 389.6 L695.4 388.9 L696.1 388.0 L696.8 387.1 L697.4 386.1 L698.1 385.1 L698.8 383.9 L699.6 382.8 L700.3 381.5 L701.0 380.1 L701.7 378.7 L702.5 377.1 L703.2 375.5 L704.0 373.8 L704.8 372.1 L705.5 370.4 L706.2 368.8 L706.9 367.2 L707.6 365.7 L708.3 364.2 L709.0 362.8 L709.7 361.3 L710.5 359.7 L711.2 358.2 L711.9 356.7 L712.6 355.3 L713.1 353.8 L713.6 352.5 L714.0 351.1 L714.2 349.8 L714.3 348.6 L714.3 347.4 L714.1 346.4 L713.9 345.5 L713.6 344.7 L713.4 344.0 L713.1 343.4 L712.9 343.0 L712.8 342.6Z" fill="#362c28"/><path d="M707.3 356.3 L707.9 355.9 L708.6 355.3 L709.5 354.6 L710.5 353.8 L711.5 352.9 L712.6 352.1 L713.7 351.3 L714.8 350.5 L715.8 349.9 L716.8 349.4 L717.8 348.9 L718.8 348.5 L719.9 348.0 L721.0 347.6 L722.1 347.3 L723.2 347.0 L724.2 346.7 L725.2 346.6 L726.2 346.5 L727.0 346.5 L727.8 346.6 L728.7 346.8 L729.6 347.0 L730.4 347.3 L731.1 347.6 L731.8 348.0 L732.3 348.4 L732.8 348.8 L733.0 349.1 L733.1 349.4 L733.2 349.8 L733.2 350.3 L733.1 350.8 L733.0 351.5 L732.9 352.2 L732.7 353.0 L732.4 353.8 L732.1 354.7 L731.7 355.6 L731.3 356.5 L730.8 357.4 L730.2 358.4 L729.5 359.5 L728.8 360.7 L727.9 361.9 L726.9 363.2 L726.0 364.5 L724.9 365.8 L723.9 367.2 L722.9 368.5 L721.9 369.7 L720.8 371.0 L719.7 372.4 L718.5 373.8 L717.3 375.1 L716.1 376.5 L714.9 377.9 L713.7 379.3 L712.6 380.6 L711.6 381.9 L710.7 383.1 L709.8 384.4 L708.9 385.6 L708.1 386.7 L707.4 387.9 L706.7 388.9 L706.0 390.0 L705.4 391.0 L704.9 391.9 L704.4 392.8 L704.0 393.6 L703.6 394.4 L703.3 395.2 L703.1 395.9 L702.9 396.5 L702.7 397.1 L702.6 397.6 L702.4 398.1 L702.3 398.5 L702.2 398.8 L702.8 399.2 L703.0 399.0 L703.4 398.7 L703.7 398.4 L704.2 398.1 L704.6 397.7 L705.2 397.3 L705.7 396.9 L706.3 396.4 L706.9 395.8 L707.6 395.2 L708.3 394.5 L709.1 393.8 L709.9 392.9 L710.7 392.1 L711.6 391.1 L712.5 390.2 L713.4 389.2 L714.4 388.2 L715.4 387.1 L716.4 386.1 L717.5 385.0 L718.7 383.9 L719.9 382.7 L721.2 381.5 L722.6 380.2 L723.9 378.9 L725.3 377.6 L726.6 376.3 L727.9 374.9 L729.1 373.5 L730.2 372.2 L731.3 370.9 L732.4 369.5 L733.5 368.1 L734.6 366.7 L735.6 365.3 L736.5 363.9 L737.3 362.4 L738.1 361.0 L738.7 359.5 L739.1 358.1 L739.5 356.7 L739.7 355.3 L739.8 353.9 L739.8 352.6 L739.7 351.3 L739.4 350.0 L739.1 348.8 L738.6 347.6 L737.9 346.6 L737.1 345.6 L736.1 344.8 L735.0 344.1 L733.9 343.6 L732.8 343.2 L731.7 342.9 L730.5 342.7 L729.3 342.5 L728.1 342.5 L727.0 342.5 L725.8 342.6 L724.6 342.8 L723.4 343.1 L722.2 343.4 L721.0 343.8 L719.7 344.3 L718.5 344.8 L717.4 345.3 L716.3 346.0 L715.2 346.6 L714.1 347.4 L713.1 348.3 L712.0 349.4 L711.0 350.4 L710.1 351.5 L709.2 352.5 L708.4 353.5 L707.7 354.4 L707.1 355.1 L706.7 355.7Z" fill="#362c28"/><path d="M577.6 403.6 V414.6 H580.5 A5.6 5.5 0 0 0 580.5 403.6 Z M593.5 403.6 H587.7 V414.6 H593.5 M587.7 409.1 H592.8 M602.4 405.20000000000005 Q600.9 403.6 598.7 403.6 Q595.4 403.6 595.4 406.40000000000003 Q595.4 408.8 598.9 409.1 Q602.8 409.6 602.8 411.8 Q602.8 414.6 598.9 414.6 Q596 414.6 595 412.8 M605.6 403.6 V414.6 M618.8 405.6 A5.4 5.5 0 1 0 619.3 409.1 H614 M621.8 414.6 V403.6 L630.5 414.6 V403.6 M631.6 414.6 L636.9 403.6 L642.2 414.6 M633.6 410.5 H640.2 M652.6 405.6 A5.2 5.5 0 1 0 653.2 409.1 H648 M661.8 403.6 H655.4 V414.6 H661.8 M655.4 409.1 H661 M664.2 414.6 V403.6 L672.6 414.6 V403.6 M672.8 403.6 H682 M677.4 403.6 V414.6 M684 403.6 V410.8 A3.9 3.8 0 0 0 691.8 410.8 V403.6 M694.4 414.6 V403.6 H697.6 A3 2.9 0 0 1 697.6 409.90000000000003 H694.4 M697.4 409.90000000000003 L701.4 414.6" fill="none" stroke="#454040" stroke-width="0.95"/></svg>
<svg class="a" style="left:0;top:0" width="1679" height="1009" viewBox="0 0 1679 1009"><defs><radialGradient id="tg" cx="0.45" cy="0.4" r="0.6"><stop offset="0" stop-color="#96d3d6"/><stop offset="0.7" stop-color="#8accd0"/><stop offset="1" stop-color="#85c9cd"/></radialGradient></defs><path d="M791.40 740.50 A5.57 5.57 0 0 1 790.54 751.39 A5.57 5.57 0 0 1 787.99 762.01 A5.57 5.57 0 0 1 783.81 772.10 A5.57 5.57 0 0 1 778.11 781.41 A5.57 5.57 0 0 1 771.01 789.71 A5.57 5.57 0 0 1 762.71 796.81 A5.57 5.57 0 0 1 753.40 802.51 A5.57 5.57 0 0 1 743.31 806.69 A5.57 5.57 0 0 1 732.69 809.24 A5.57 5.57 0 0 1 721.80 810.10 A5.57 5.57 0 0 1 710.91 809.24 A5.57 5.57 0 0 1 700.29 806.69 A5.57 5.57 0 0 1 690.20 802.51 A5.57 5.57 0 0 1 680.89 796.81 A5.57 5.57 0 0 1 672.59 789.71 A5.57 5.57 0 0 1 665.49 781.41 A5.57 5.57 0 0 1 659.79 772.10 A5.57 5.57 0 0 1 655.61 762.01 A5.57 5.57 0 0 1 653.06 751.39 A5.57 5.57 0 0 1 652.20 740.50 A5.57 5.57 0 0 1 653.06 729.61 A5.57 5.57 0 0 1 655.61 718.99 A5.57 5.57 0 0 1 659.79 708.90 A5.57 5.57 0 0 1 665.49 699.59 A5.57 5.57 0 0 1 672.59 691.29 A5.57 5.57 0 0 1 680.89 684.19 A5.57 5.57 0 0 1 690.20 678.49 A5.57 5.57 0 0 1 700.29 674.31 A5.57 5.57 0 0 1 710.91 671.76 A5.57 5.57 0 0 1 721.80 670.90 A5.57 5.57 0 0 1 732.69 671.76 A5.57 5.57 0 0 1 743.31 674.31 A5.57 5.57 0 0 1 753.40 678.49 A5.57 5.57 0 0 1 762.71 684.19 A5.57 5.57 0 0 1 771.01 691.29 A5.57 5.57 0 0 1 778.11 699.59 A5.57 5.57 0 0 1 783.81 708.90 A5.57 5.57 0 0 1 787.99 718.99 A5.57 5.57 0 0 1 790.54 729.61 A5.57 5.57 0 0 1 791.40 740.50Z" fill="rgba(0,0,0,0.18)" transform="translate(0.5 1.5)"/><path d="M791.40 740.50 A5.57 5.57 0 0 1 790.54 751.39 A5.57 5.57 0 0 1 787.99 762.01 A5.57 5.57 0 0 1 783.81 772.10 A5.57 5.57 0 0 1 778.11 781.41 A5.57 5.57 0 0 1 771.01 789.71 A5.57 5.57 0 0 1 762.71 796.81 A5.57 5.57 0 0 1 753.40 802.51 A5.57 5.57 0 0 1 743.31 806.69 A5.57 5.57 0 0 1 732.69 809.24 A5.57 5.57 0 0 1 721.80 810.10 A5.57 5.57 0 0 1 710.91 809.24 A5.57 5.57 0 0 1 700.29 806.69 A5.57 5.57 0 0 1 690.20 802.51 A5.57 5.57 0 0 1 680.89 796.81 A5.57 5.57 0 0 1 672.59 789.71 A5.57 5.57 0 0 1 665.49 781.41 A5.57 5.57 0 0 1 659.79 772.10 A5.57 5.57 0 0 1 655.61 762.01 A5.57 5.57 0 0 1 653.06 751.39 A5.57 5.57 0 0 1 652.20 740.50 A5.57 5.57 0 0 1 653.06 729.61 A5.57 5.57 0 0 1 655.61 718.99 A5.57 5.57 0 0 1 659.79 708.90 A5.57 5.57 0 0 1 665.49 699.59 A5.57 5.57 0 0 1 672.59 691.29 A5.57 5.57 0 0 1 680.89 684.19 A5.57 5.57 0 0 1 690.20 678.49 A5.57 5.57 0 0 1 700.29 674.31 A5.57 5.57 0 0 1 710.91 671.76 A5.57 5.57 0 0 1 721.80 670.90 A5.57 5.57 0 0 1 732.69 671.76 A5.57 5.57 0 0 1 743.31 674.31 A5.57 5.57 0 0 1 753.40 678.49 A5.57 5.57 0 0 1 762.71 684.19 A5.57 5.57 0 0 1 771.01 691.29 A5.57 5.57 0 0 1 778.11 699.59 A5.57 5.57 0 0 1 783.81 708.90 A5.57 5.57 0 0 1 787.99 718.99 A5.57 5.57 0 0 1 790.54 729.61 A5.57 5.57 0 0 1 791.40 740.50Z" fill="#eee8d9"/><circle cx="721.8" cy="740.5" r="62.6" fill="url(#tg)"/><circle cx="721.8" cy="740.5" r="62.6" fill="none" stroke="#3a3330" stroke-width="1.4" stroke-dasharray="0.9 0.9"/><circle cx="721.8" cy="740.5" r="61.2" fill="none" stroke="#c8e6e6" stroke-width="0.6" opacity="0.7"/><path d="M700.6 734.8 L700.5 734.4 L700.2 734.0 L699.9 733.5 L699.6 732.9 L699.3 732.3 L699.0 731.7 L698.8 731.0 L698.6 730.4 L698.6 729.8 L698.6 729.3 L698.7 728.8 L698.8 728.2 L699.1 727.7 L699.4 727.1 L699.7 726.5 L700.1 725.9 L700.5 725.3 L700.9 724.8 L701.4 724.2 L701.9 723.7 L702.5 723.2 L703.2 722.7 L703.8 722.1 L704.6 721.6 L705.3 721.1 L706.1 720.6 L706.9 720.1 L707.8 719.7 L708.6 719.3 L709.5 719.0 L710.5 718.7 L711.5 718.4 L712.5 718.2 L713.6 718.0 L714.7 717.8 L715.9 717.7 L717.0 717.6 L718.1 717.5 L719.2 717.5 L720.2 717.5 L721.1 717.5 L722.1 717.6 L723.0 717.7 L723.9 717.8 L724.8 718.0 L725.7 718.2 L726.7 718.4 L727.6 718.6 L728.5 718.9 L729.4 719.1 L730.4 719.3 L731.4 719.6 L732.4 719.8 L733.4 720.1 L734.4 720.4 L735.4 720.7 L736.3 721.0 L737.1 721.3 L737.8 721.5 L738.3 721.6 L738.5 721.2 L738.0 721.0 L737.4 720.6 L736.6 720.3 L735.8 719.9 L734.8 719.4 L733.9 719.0 L732.9 718.5 L731.9 718.1 L730.9 717.7 L730.0 717.3 L729.1 717.0 L728.2 716.7 L727.2 716.4 L726.3 716.1 L725.4 715.8 L724.4 715.5 L723.4 715.3 L722.4 715.1 L721.3 715.0 L720.2 714.9 L719.1 714.9 L718.0 714.9 L716.8 715.0 L715.6 715.1 L714.4 715.3 L713.2 715.4 L712.0 715.7 L710.8 715.9 L709.7 716.3 L708.7 716.6 L707.7 717.0 L706.7 717.5 L705.8 718.0 L704.9 718.5 L704.0 719.1 L703.2 719.7 L702.4 720.4 L701.7 721.0 L701.0 721.6 L700.5 722.3 L699.9 722.9 L699.4 723.6 L699.0 724.3 L698.6 725.0 L698.2 725.8 L698.0 726.5 L697.7 727.2 L697.6 727.9 L697.5 728.6 L697.4 729.3 L697.5 730.0 L697.7 730.7 L698.0 731.4 L698.3 732.0 L698.7 732.7 L699.1 733.3 L699.4 733.8 L699.7 734.3 L700.0 734.7 L700.2 735.0Z" fill="#2c2a29"/><path d="M699.6 723.6 L699.1 723.5 L698.3 723.4 L697.5 723.3 L696.6 723.2 L695.5 723.1 L694.4 723.0 L693.3 722.9 L692.2 722.9 L691.0 723.0 L690.0 723.2 L688.9 723.5 L687.8 723.9 L686.7 724.3 L685.6 724.7 L684.5 725.2 L683.3 725.8 L682.2 726.4 L681.2 727.1 L680.1 727.8 L679.2 728.6 L678.3 729.5 L677.4 730.4 L676.5 731.4 L675.6 732.4 L674.8 733.5 L674.1 734.6 L673.4 735.8 L672.7 736.9 L672.1 738.0 L671.6 739.2 L671.2 740.3 L670.8 741.5 L670.5 742.7 L670.2 743.9 L670.0 745.1 L669.9 746.3 L669.8 747.5 L669.8 748.6 L669.8 749.8 L670.0 750.9 L670.2 752.0 L670.5 753.0 L670.9 754.1 L671.4 755.1 L671.9 756.1 L672.5 757.0 L673.1 757.9 L673.7 758.7 L674.4 759.5 L675.1 760.2 L675.8 760.8 L676.6 761.3 L677.4 761.8 L678.3 762.2 L679.2 762.5 L680.1 762.8 L681.0 763.0 L681.9 763.2 L682.8 763.3 L683.7 763.4 L684.7 763.4 L685.8 763.3 L686.9 763.1 L688.1 762.8 L689.2 762.5 L690.2 762.2 L691.2 762.0 L692.1 761.7 L692.8 761.5 L693.4 761.3 L693.2 760.7 L692.6 760.8 L691.9 760.9 L691.0 761.1 L690.0 761.3 L688.9 761.5 L687.8 761.6 L686.7 761.8 L685.7 761.8 L684.7 761.9 L683.9 761.8 L683.0 761.7 L682.2 761.5 L681.4 761.3 L680.6 761.1 L679.8 760.8 L679.1 760.4 L678.4 760.1 L677.7 759.6 L677.1 759.2 L676.5 758.6 L675.9 758.0 L675.4 757.4 L674.8 756.6 L674.3 755.8 L673.8 755.0 L673.4 754.1 L673.0 753.2 L672.7 752.3 L672.4 751.4 L672.2 750.5 L672.1 749.6 L672.1 748.6 L672.1 747.6 L672.2 746.5 L672.3 745.4 L672.5 744.3 L672.8 743.2 L673.0 742.1 L673.4 741.1 L673.8 740.0 L674.2 739.0 L674.7 737.9 L675.3 736.8 L675.9 735.8 L676.6 734.7 L677.3 733.7 L678.0 732.6 L678.8 731.7 L679.6 730.8 L680.4 730.0 L681.3 729.2 L682.2 728.5 L683.1 727.8 L684.1 727.2 L685.1 726.6 L686.2 726.0 L687.2 725.5 L688.3 725.1 L689.3 724.7 L690.2 724.4 L691.2 724.1 L692.2 723.9 L693.3 723.9 L694.4 723.8 L695.5 723.8 L696.5 723.9 L697.4 723.9 L698.3 724.0 L699.0 724.0 L699.6 724.0Z" fill="#2c2a29"/><path d="M686.2 763.7 L686.8 763.6 L687.5 763.5 L688.4 763.4 L689.4 763.3 L690.6 763.2 L691.7 763.0 L692.9 762.7 L694.2 762.4 L695.4 762.0 L696.5 761.4 L697.6 760.7 L698.6 760.0 L699.6 759.2 L700.5 758.3 L701.5 757.4 L702.4 756.4 L703.4 755.4 L704.3 754.3 L705.3 753.2 L706.2 752.1 L707.2 750.8 L708.2 749.5 L709.3 748.0 L710.3 746.6 L711.3 745.1 L712.3 743.6 L713.2 742.1 L714.2 740.6 L715.1 739.3 L716.0 738.0 L716.9 736.7 L717.8 735.5 L718.7 734.2 L719.5 733.0 L720.3 731.9 L721.1 730.8 L721.9 729.7 L722.7 728.8 L723.4 727.9 L724.2 727.1 L724.9 726.4 L725.7 725.7 L726.4 725.1 L727.2 724.5 L728.0 724.0 L728.8 723.5 L729.5 723.0 L730.3 722.6 L731.0 722.3 L731.6 722.0 L732.2 721.8 L732.8 721.6 L733.5 721.5 L734.2 721.5 L734.9 721.5 L735.5 721.5 L736.2 721.6 L736.7 721.6 L737.2 721.7 L737.6 721.7 L737.8 721.1 L737.4 721.0 L737.0 720.8 L736.5 720.5 L735.9 720.2 L735.2 719.9 L734.5 719.6 L733.7 719.4 L732.8 719.2 L731.9 719.1 L731.0 719.2 L730.1 719.4 L729.1 719.6 L728.2 719.8 L727.2 720.2 L726.2 720.6 L725.2 721.0 L724.1 721.6 L723.1 722.2 L722.1 722.9 L721.0 723.7 L720.0 724.6 L719.1 725.6 L718.1 726.6 L717.2 727.7 L716.3 728.9 L715.4 730.0 L714.5 731.3 L713.6 732.5 L712.7 733.7 L711.8 735.0 L710.8 736.4 L709.9 737.8 L708.9 739.3 L708.0 740.8 L707.0 742.3 L706.1 743.9 L705.2 745.3 L704.3 746.8 L703.4 748.1 L702.6 749.3 L701.7 750.5 L700.9 751.7 L700.1 752.8 L699.4 753.9 L698.6 754.9 L697.9 755.8 L697.1 756.7 L696.4 757.6 L695.6 758.3 L694.9 759.0 L694.1 759.6 L693.2 760.2 L692.2 760.7 L691.2 761.2 L690.2 761.6 L689.1 762.0 L688.2 762.3 L687.3 762.6 L686.6 762.9 L686.0 763.1Z" fill="#2c2a29"/><path d="M770.3 715.6 L770.1 715.4 L769.8 715.0 L769.6 714.6 L769.2 714.1 L768.9 713.6 L768.5 713.1 L768.0 712.6 L767.6 712.1 L767.0 711.7 L766.4 711.4 L765.8 711.1 L765.2 710.9 L764.5 710.7 L763.8 710.5 L763.0 710.4 L762.2 710.3 L761.3 710.3 L760.4 710.4 L759.5 710.6 L758.6 711.0 L757.6 711.4 L756.6 712.0 L755.6 712.6 L754.6 713.3 L753.5 714.1 L752.5 714.9 L751.4 715.8 L750.4 716.7 L749.3 717.6 L748.3 718.6 L747.2 719.6 L746.1 720.6 L745.1 721.7 L744.0 722.9 L742.9 724.1 L741.8 725.2 L740.8 726.4 L739.7 727.5 L738.8 728.5 L737.8 729.5 L736.8 730.4 L735.9 731.3 L734.9 732.3 L734.0 733.2 L733.0 734.1 L732.1 734.9 L731.3 735.7 L730.4 736.4 L729.7 737.0 L729.0 737.6 L728.3 738.0 L727.7 738.4 L727.1 738.7 L726.4 739.0 L725.8 739.3 L725.2 739.5 L724.7 739.7 L724.2 739.8 L723.7 740.0 L723.3 740.1 L723.5 740.7 L723.8 740.7 L724.3 740.7 L724.8 740.8 L725.4 740.9 L726.1 740.9 L726.8 740.9 L727.7 740.9 L728.6 740.7 L729.5 740.4 L730.4 740.0 L731.4 739.5 L732.3 739.0 L733.3 738.3 L734.3 737.6 L735.4 736.8 L736.4 736.0 L737.5 735.1 L738.5 734.2 L739.6 733.3 L740.6 732.3 L741.6 731.3 L742.7 730.2 L743.7 729.0 L744.8 727.9 L745.8 726.6 L746.8 725.4 L747.8 724.2 L748.8 723.1 L749.8 722.0 L750.7 721.0 L751.7 720.0 L752.6 719.1 L753.5 718.1 L754.5 717.1 L755.4 716.2 L756.2 715.4 L757.1 714.6 L757.9 713.9 L758.7 713.3 L759.4 712.8 L760.1 712.5 L760.8 712.2 L761.5 712.1 L762.2 712.0 L762.9 711.9 L763.6 712.0 L764.2 712.0 L764.8 712.2 L765.4 712.3 L766.0 712.4 L766.5 712.6 L767.0 712.9 L767.4 713.2 L767.9 713.6 L768.3 714.1 L768.7 714.5 L769.1 715.0 L769.4 715.4 L769.7 715.7 L769.9 716.0Z" fill="#2c2a29"/><path d="M709.1 740.6 L709.8 740.6 L710.7 740.6 L711.8 740.6 L713.0 740.5 L714.2 740.5 L715.5 740.5 L716.8 740.6 L718.0 740.7 L719.1 740.8 L720.0 741.1 L720.9 741.4 L721.7 741.7 L722.6 742.1 L723.3 742.6 L724.1 743.1 L724.7 743.6 L725.3 744.1 L725.7 744.7 L726.0 745.2 L726.2 745.7 L726.3 746.1 L726.3 746.7 L726.2 747.4 L726.1 748.1 L725.8 748.9 L725.5 749.8 L725.2 750.7 L724.9 751.6 L724.5 752.5 L724.3 753.4 L724.0 754.2 L723.6 755.0 L723.2 755.9 L722.8 756.8 L722.4 757.7 L721.9 758.6 L721.5 759.6 L721.2 760.6 L721.0 761.6 L721.0 762.7 L721.1 763.6 L721.3 764.5 L721.7 765.4 L722.1 766.2 L722.6 767.0 L723.1 767.8 L723.8 768.4 L724.5 769.0 L725.2 769.6 L726.0 770.0 L726.9 770.4 L727.9 770.6 L728.9 770.8 L729.9 770.9 L731.0 770.9 L732.0 770.9 L733.1 770.9 L734.2 770.8 L735.2 770.7 L736.2 770.6 L737.2 770.5 L738.2 770.3 L739.3 770.1 L740.3 769.8 L741.3 769.6 L742.3 769.3 L743.3 769.0 L744.2 768.6 L745.1 768.3 L745.8 767.9 L746.6 767.5 L747.2 767.1 L747.8 766.6 L748.3 766.0 L748.8 765.5 L749.2 765.0 L749.6 764.6 L749.9 764.2 L750.2 763.8 L750.5 763.6 L750.1 763.2 L749.9 763.5 L749.5 763.8 L749.2 764.2 L748.7 764.6 L748.3 765.0 L747.8 765.4 L747.2 765.8 L746.6 766.2 L746.0 766.6 L745.4 766.9 L744.6 767.1 L743.8 767.4 L742.9 767.7 L742.0 767.9 L741.0 768.1 L740.0 768.3 L739.0 768.5 L737.9 768.6 L737.0 768.7 L736.0 768.8 L735.1 768.8 L734.1 768.8 L733.1 768.8 L732.0 768.8 L731.1 768.7 L730.1 768.6 L729.2 768.5 L728.4 768.3 L727.7 768.1 L727.2 767.8 L726.7 767.4 L726.2 767.0 L725.8 766.5 L725.4 766.0 L725.0 765.5 L724.8 764.9 L724.5 764.3 L724.4 763.7 L724.3 763.1 L724.2 762.5 L724.2 762.0 L724.4 761.4 L724.6 760.7 L725.0 760.0 L725.3 759.1 L725.8 758.2 L726.2 757.3 L726.6 756.3 L727.0 755.3 L727.3 754.4 L727.6 753.5 L727.9 752.6 L728.1 751.6 L728.4 750.7 L728.7 749.7 L728.9 748.7 L729.0 747.7 L729.0 746.7 L728.9 745.7 L728.6 744.7 L728.1 743.9 L727.5 743.2 L726.8 742.5 L726.0 741.9 L725.1 741.4 L724.2 741.0 L723.3 740.6 L722.3 740.2 L721.3 740.0 L720.4 739.7 L719.3 739.6 L718.1 739.5 L716.8 739.5 L715.5 739.6 L714.2 739.7 L712.9 739.8 L711.7 739.9 L710.7 740.0 L709.8 740.1 L709.1 740.2Z" fill="#2c2a29"/></svg>
<div class="a" style="left:197px;top:97px;width:1px;height:118px;background:#7af2f2"></div>
<div class="a" style="left:197px;top:215px;width:1px;height:526px;background:#7af2f2"></div>
<div class="a" style="left:197px;top:741px;width:1px;height:268px;background:#7af2f2"></div>
<div class="a" style="left:220px;top:97px;width:1px;height:118px;background:#7af2f2"></div>
<div class="a" style="left:220px;top:215px;width:1px;height:526px;background:#62dcdc"></div>
<div class="a" style="left:220px;top:741px;width:1px;height:268px;background:#7af2f2"></div>
<div class="a" style="left:257px;top:97px;width:1px;height:118px;background:#7af2f2"></div>
<div class="a" style="left:257px;top:215px;width:1px;height:526px;background:#62dcdc"></div>
<div class="a" style="left:257px;top:741px;width:1px;height:268px;background:#7af2f2"></div>
<div class="a" style="left:722px;top:97px;width:1px;height:118px;background:#7af2f2"></div>
<div class="a" style="left:722px;top:215px;width:1px;height:526px;background:#62dcdc"></div>
<div class="a" style="left:722px;top:741px;width:1px;height:268px;background:#7af2f2"></div>
<div class="a" style="left:1189px;top:97px;width:1px;height:118px;background:#7af2f2"></div>
<div class="a" style="left:1189px;top:215px;width:1px;height:526px;background:#62dcdc"></div>
<div class="a" style="left:1189px;top:741px;width:1px;height:268px;background:#7af2f2"></div>
<div class="a" style="left:1226px;top:97px;width:1px;height:118px;background:#7af2f2"></div>
<div class="a" style="left:1226px;top:215px;width:1px;height:526px;background:#62dcdc"></div>
<div class="a" style="left:1226px;top:741px;width:1px;height:268px;background:#7af2f2"></div>
<div class="a" style="left:1247px;top:97px;width:1px;height:118px;background:#7af2f2"></div>
<div class="a" style="left:1247px;top:215px;width:1px;height:526px;background:#7af2f2"></div>
<div class="a" style="left:1247px;top:741px;width:1px;height:268px;background:#7af2f2"></div>
<div class="a" style="left:97px;top:237px;width:100px;height:1px;background:#7af2f2"></div>
<div class="a" style="left:197px;top:237px;width:1051px;height:1px;background:#62dcdc"></div>
<div class="a" style="left:1248px;top:237px;width:101px;height:1px;background:#7af2f2"></div>
<div class="a" style="left:97px;top:274px;width:100px;height:1px;background:#7af2f2"></div>
<div class="a" style="left:197px;top:274px;width:1051px;height:1px;background:#62dcdc"></div>
<div class="a" style="left:1248px;top:274px;width:101px;height:1px;background:#7af2f2"></div>
<div class="a" style="left:97px;top:565px;width:100px;height:1px;background:#7af2f2"></div>
<div class="a" style="left:197px;top:565px;width:1051px;height:1px;background:#62dcdc"></div>
<div class="a" style="left:1248px;top:565px;width:101px;height:1px;background:#7af2f2"></div>
<div class="a" style="left:97px;top:740px;width:100px;height:1px;background:#7af2f2"></div>
<div class="a" style="left:197px;top:740px;width:1051px;height:1px;background:#62dcdc"></div>
<div class="a" style="left:1248px;top:740px;width:101px;height:1px;background:#7af2f2"></div>
<div class="a" style="left:97px;top:857px;width:1252px;height:1px;background:#7af2f2"></div>
<div class="a" style="left:97px;top:891px;width:1252px;height:1px;background:#7af2f2"></div>
<svg class="a" style="left:0px;top:74px;" width="38" height="660" viewBox="0 0 38 660"><rect x="12" y="3" width="1" height="3" fill="#3a3a3a"/><rect x="14" y="3" width="1" height="3" fill="#3a3a3a"/><rect x="16" y="3" width="1" height="3" fill="#3a3a3a"/><rect x="18" y="3" width="1" height="3" fill="#3a3a3a"/><rect x="20" y="3" width="1" height="3" fill="#3a3a3a"/><rect x="22" y="3" width="1" height="3" fill="#3a3a3a"/><rect x="24" y="3" width="1" height="3" fill="#3a3a3a"/><rect x="26" y="3" width="1" height="3" fill="#3a3a3a"/><rect x="5.5" y="16.5" width="28" height="21" rx="2" fill="#383838" stroke="#2f2f2f"/><path d="M11 20 V33 L14 30 L16.5 33.5 L18 32.5 L16 29 L20 28.5Z" fill="#c8c8c8"/><path d="M24.5 26 V35 M20 30.5 H29" stroke="#c8c8c8" stroke-width="1.2"/><path d="M24.5 25 l-2 2h4z M24.5 36 l-2 -2h4z M19 30.5 l2 -2v4z M30 30.5 l-2 -2v4z" fill="#c8c8c8"/><rect x="12.5" y="47.5" width="13" height="12" fill="none" stroke="#c8c8c8" stroke-dasharray="3 2"/><path d="M32 60 L32 64 L29 64 Z" fill="#d8d8d8"/><path d="M11 74 L16 83 L19 88 L25 83 L27 72 L20 78 Z" fill="none" stroke="#c8c8c8" stroke-width="1.5"/><path d="M19 88 L17 90" stroke="#c8c8c8"/><path d="M32 87 L32 91 L29 91 Z" fill="#d8d8d8"/><path d="M15 98 L16.5 103 L21 101 L18 105 L22 108 L17 108 L16 113 L14 108.5 L9 110 L12 106 L9 102 L14 103Z" fill="#c8c8c8"/><path d="M18 108 L28 117" stroke="#c8c8c8" stroke-width="2.2"/><path d="M32 113 L32 117 L29 117 Z" fill="#d8d8d8"/><path d="M15.5 124 V137.5 H28 M11 128.5 H24.5 V141" fill="none" stroke="#c8c8c8" stroke-width="2"/><path d="M32 139 L32 143 L29 143 Z" fill="#d8d8d8"/><path d="M12 168 L22 156" stroke="#c8c8c8" stroke-width="2.5"/><path d="M11 169 L13 167" stroke="#c8c8c8" stroke-width="2"/><circle cx="24.5" cy="153.5" r="3" fill="#c8c8c8"/><path d="M19 153 L26 160" stroke="#c8c8c8" stroke-width="2.4"/><path d="M32 165 L32 169 L29 169 Z" fill="#d8d8d8"/><rect x="3" y="170" width="31" height="1" fill="#444"/><rect x="3" y="171" width="31" height="1" fill="#5c5c5c"/><g transform="rotate(-45 20 187)"><rect x="11" y="183" width="18" height="8" rx="4" fill="#b0b0b0"/><rect x="17" y="184.5" width="6" height="5" fill="#888"/></g><path d="M13 185 a4 4 0 0 1 4 -6" fill="none" stroke="#c8c8c8" stroke-dasharray="1 1"/><path d="M32 194 L32 198 L29 198 Z" fill="#d8d8d8"/><path d="M17 217 L28 205" stroke="#c8c8c8" stroke-width="2.4"/><path d="M11 220 Q12 214 17 215 Q19 218 16 220 Q13 222 11 220Z" fill="#c8c8c8"/><path d="M32 220 L32 224 L29 224 Z" fill="#d8d8d8"/><circle cx="19" cy="231" r="3.5" fill="#c8c8c8"/><rect x="17.5" y="233" width="3" height="5" fill="#c8c8c8"/><rect x="11" y="238" width="17" height="4" fill="#c8c8c8"/><rect x="11" y="243" width="17" height="2" fill="#c8c8c8"/><path d="M32 246 L32 250 L29 250 Z" fill="#d8d8d8"/><path d="M17 267 L28 256" stroke="#c8c8c8" stroke-width="2.2"/><path d="M11 271 Q12 265 17 266 Q19 269 16 271 Q13 273 11 271Z" fill="#c8c8c8"/><path d="M11 263 Q14 258 20 259" fill="none" stroke="#c8c8c8" stroke-width="1.5"/><path d="M9 261 l3 3 l1 -4z" fill="#c8c8c8"/><path d="M32 272 L32 276 L29 276 Z" fill="#d8d8d8"/><path d="M11 290 L18 284 L28 284 L21 290Z" fill="#d0d0d0"/><path d="M11 290 H21 V297 H11Z" fill="#9a9a9a"/><path d="M21 290 L28 284 V291 L21 297Z" fill="#7a7a7a"/><path d="M32 298 L32 302 L29 302 Z" fill="#d8d8d8"/><defs><linearGradient id="gr"><stop offset="0" stop-color="#444"/><stop offset="1" stop-color="#aaa"/></linearGradient></defs><rect x="11.5" y="310.5" width="16" height="14" fill="url(#gr)" stroke="#c8c8c8"/><path d="M32 324 L32 328 L29 328 Z" fill="#d8d8d8"/><path d="M19 335 Q14 343 14 347 A5 5 0 0 0 24 347 Q24 343 19 335Z" fill="#b0b0b0"/><path d="M32 351 L32 355 L29 355 Z" fill="#d8d8d8"/><circle cx="17" cy="366" r="5" fill="#b0b0b0"/><path d="M20 369 L27 376" stroke="#c8c8c8" stroke-width="2.5"/><path d="M32 377 L32 381 L29 381 Z" fill="#d8d8d8"/><rect x="3" y="383" width="31" height="1" fill="#444"/><rect x="3" y="384" width="31" height="1" fill="#5c5c5c"/><path d="M11 405 L14 396 L21 390 L26 395 L20 402Z" fill="#b0b0b0"/><circle cx="17.5" cy="398.5" r="1.2" fill="#444"/><path d="M22 389 L27 394" stroke="#c8c8c8" stroke-width="2"/><path d="M32 405 L32 409 L29 409 Z" fill="#d8d8d8"/><path d="M12 417 V420 M12 417.8 H26 M26 417 V420 M19 418 V431 M16 431.5 H22" stroke="#c8c8c8" stroke-width="1.8"/><path d="M32 431 L32 435 L29 435 Z" fill="#d8d8d8"/><path d="M13 441 V456 L16.5 452.5 L19.5 458 L21.5 457 L18.5 451.5 L23 451Z" fill="#1e1e1e" stroke="#c8c8c8"/><path d="M32 457 L32 461 L29 461 Z" fill="#d8d8d8"/><rect x="12.5" y="469.5" width="14" height="13" fill="#777" stroke="#c8c8c8"/><path d="M32 483 L32 487 L29 487 Z" fill="#d8d8d8"/><rect x="3" y="489" width="31" height="1" fill="#444"/><rect x="3" y="490" width="31" height="1" fill="#5c5c5c"/><path d="M12 503 L12 498 Q13 496 14 498 L14 502 L14 495 Q15 493 16 495 L16 501 L16 494 Q17.5 492 19 494 L19 501 L19 495 Q20.5 493 22 495 L22 503 L24 500 Q26 499 26 501 L22 510 Q20 512 16 512 Q12 511 12 507Z" fill="#b0b0b0"/><path d="M32 512 L32 516 L29 516 Z" fill="#d8d8d8"/><circle cx="17" cy="528" r="5" fill="#777" stroke="#c8c8c8" stroke-width="2"/><path d="M20.5 531.5 L27 538" stroke="#c8c8c8" stroke-width="3"/><rect x="7.5" y="551.5" width="6" height="6" fill="#ddd" stroke="#333"/><rect x="4.5" y="547.5" width="6" height="6" fill="#222" stroke="#ccc"/><path d="M23 548 Q29 548 29 554" fill="none" stroke="#c8c8c8" stroke-width="1.3"/><path d="M21 548 l3 -2.5 v5z M29 556 l-2.5 -3 h5z" fill="#c8c8c8"/><rect x="15" y="572.5" width="18" height="18" fill="#fff" stroke="#2a2a2a"/><rect x="5" y="562.5" width="18" height="18" fill="#3f342c" stroke="#fff" stroke-width="1.5"/><rect x="10.5" y="600.5" width="17" height="13" fill="none" stroke="#c8c8c8"/><circle cx="19" cy="607" r="4" fill="none" stroke="#c8c8c8" stroke-dasharray="1.2 1.2"/><rect x="10.5" y="630.5" width="10" height="9" fill="#888" stroke="#c8c8c8"/><rect x="15.5" y="626.5" width="11" height="9" fill="#777" stroke="#c8c8c8"/><path d="M32 638 L32 642 L29 642Z" fill="#d8d8d8"/></svg>
<svg class="a" style="left:41px;top:74px;" width="37" height="70" viewBox="0 0 37 70"><rect x="10" y="3" width="1" height="3" fill="#3a3a3a"/><rect x="12" y="3" width="1" height="3" fill="#3a3a3a"/><rect x="14" y="3" width="1" height="3" fill="#3a3a3a"/><rect x="16" y="3" width="1" height="3" fill="#3a3a3a"/><rect x="18" y="3" width="1" height="3" fill="#3a3a3a"/><rect x="20" y="3" width="1" height="3" fill="#3a3a3a"/><rect x="22" y="3" width="1" height="3" fill="#3a3a3a"/><rect x="24" y="3" width="1" height="3" fill="#3a3a3a"/><rect x="14" y="27" width="10" height="9" fill="#c0c0c0"/><path d="M15 27 L11 18 M19 27 L19 15 M22 27 L26 19" stroke="#c0c0c0" stroke-width="2"/><circle cx="11" cy="17" r="2.5" fill="#c0c0c0"/><circle cx="19" cy="15" r="2" fill="#c0c0c0"/><circle cx="26.5" cy="18.5" r="2.5" fill="#c0c0c0"/><path d="M10 46 H28 M10 56 H28" stroke="#c0c0c0" stroke-width="2"/><circle cx="24" cy="46" r="3" fill="#c0c0c0"/><circle cx="24" cy="56" r="3.5" fill="#c0c0c0"/><rect x="0" y="67" width="37" height="1" fill="#3c3c3c"/><rect x="0" y="68" width="37" height="1" fill="#5e5e5e"/></svg>
<svg class="a" style="left:5px;top:64px;" width="12" height="9" viewBox="0 0 12 9"><path d="M1 1 L5 4.5 L1 8Z M6 1 L10 4.5 L6 8Z" fill="#cfcfcf"/></svg>
<svg class="a" style="left:44px;top:64px;" width="12" height="9" viewBox="0 0 12 9"><path d="M1 1 L5 4.5 L1 8Z M6 1 L10 4.5 L6 8Z" fill="#cfcfcf"/></svg>
<svg class="a" style="left:1393px;top:64px;" width="12" height="9" viewBox="0 0 12 9"><path d="M11 1 L7 4.5 L11 8Z M6 1 L2 4.5 L6 8Z" fill="#cfcfcf"/></svg>
<svg class="a" style="left:1663px;top:64px;" width="12" height="9" viewBox="0 0 12 9"><path d="M1 1 L5 4.5 L1 8Z M6 1 L10 4.5 L6 8Z" fill="#cfcfcf"/></svg>
<div class="a" style="left:1367px;top:74px;width:38px;height:67px;background:#535353;box-shadow:inset 0 -1px 0 #3a3a3a,inset 1px 0 0 #5d5d5d"></div>
<svg class="a" style="left:1377px;top:78px;" width="18" height="3" viewBox="0 0 18 3"><rect x="0" y="0" width="1" height="3" fill="#3a3a3a"/><rect x="2" y="0" width="1" height="3" fill="#3a3a3a"/><rect x="4" y="0" width="1" height="3" fill="#3a3a3a"/><rect x="6" y="0" width="1" height="3" fill="#3a3a3a"/><rect x="8" y="0" width="1" height="3" fill="#3a3a3a"/><rect x="10" y="0" width="1" height="3" fill="#3a3a3a"/><rect x="12" y="0" width="1" height="3" fill="#3a3a3a"/><rect x="14" y="0" width="1" height="3" fill="#3a3a3a"/><rect x="16" y="0" width="1" height="3" fill="#3a3a3a"/></svg>
<div class="a" style="left:1367px;top:142px;width:38px;height:41px;background:#535353;box-shadow:inset 0 -1px 0 #3a3a3a,inset 1px 0 0 #5d5d5d"></div>
<svg class="a" style="left:1377px;top:146px;" width="18" height="3" viewBox="0 0 18 3"><rect x="0" y="0" width="1" height="3" fill="#3a3a3a"/><rect x="2" y="0" width="1" height="3" fill="#3a3a3a"/><rect x="4" y="0" width="1" height="3" fill="#3a3a3a"/><rect x="6" y="0" width="1" height="3" fill="#3a3a3a"/><rect x="8" y="0" width="1" height="3" fill="#3a3a3a"/><rect x="10" y="0" width="1" height="3" fill="#3a3a3a"/><rect x="12" y="0" width="1" height="3" fill="#3a3a3a"/><rect x="14" y="0" width="1" height="3" fill="#3a3a3a"/><rect x="16" y="0" width="1" height="3" fill="#3a3a3a"/></svg>
<div class="a" style="left:1367px;top:184px;width:38px;height:40px;background:#535353;box-shadow:inset 0 -1px 0 #3a3a3a,inset 1px 0 0 #5d5d5d"></div>
<svg class="a" style="left:1377px;top:188px;" width="18" height="3" viewBox="0 0 18 3"><rect x="0" y="0" width="1" height="3" fill="#3a3a3a"/><rect x="2" y="0" width="1" height="3" fill="#3a3a3a"/><rect x="4" y="0" width="1" height="3" fill="#3a3a3a"/><rect x="6" y="0" width="1" height="3" fill="#3a3a3a"/><rect x="8" y="0" width="1" height="3" fill="#3a3a3a"/><rect x="10" y="0" width="1" height="3" fill="#3a3a3a"/><rect x="12" y="0" width="1" height="3" fill="#3a3a3a"/><rect x="14" y="0" width="1" height="3" fill="#3a3a3a"/><rect x="16" y="0" width="1" height="3" fill="#3a3a3a"/></svg>
<div class="a" style="left:1367px;top:225px;width:38px;height:40px;background:#535353;box-shadow:inset 0 -1px 0 #3a3a3a,inset 1px 0 0 #5d5d5d"></div>
<svg class="a" style="left:1377px;top:229px;" width="18" height="3" viewBox="0 0 18 3"><rect x="0" y="0" width="1" height="3" fill="#3a3a3a"/><rect x="2" y="0" width="1" height="3" fill="#3a3a3a"/><rect x="4" y="0" width="1" height="3" fill="#3a3a3a"/><rect x="6" y="0" width="1" height="3" fill="#3a3a3a"/><rect x="8" y="0" width="1" height="3" fill="#3a3a3a"/><rect x="10" y="0" width="1" height="3" fill="#3a3a3a"/><rect x="12" y="0" width="1" height="3" fill="#3a3a3a"/><rect x="14" y="0" width="1" height="3" fill="#3a3a3a"/><rect x="16" y="0" width="1" height="3" fill="#3a3a3a"/></svg>
<svg class="a" style="left:1379px;top:87px;" width="18" height="20" viewBox="0 0 18 20"><rect x="2.5" y="2.5" width="4" height="4" fill="none" stroke="#c4c4c4"/><rect x="2.5" y="8.5" width="4" height="4" fill="none" stroke="#c4c4c4"/><rect x="2" y="14" width="5" height="5" fill="#a8a8a8"/><path d="M10 3.5 Q15.5 5 14.5 10.5 Q14 14 10.5 16" fill="none" stroke="#c4c4c4" stroke-width="1.6"/><path d="M9 1.5 l4 1.5 l-3 2.5z" fill="#c4c4c4"/></svg>
<svg class="a" style="left:1379px;top:116px;" width="18" height="17" viewBox="0 0 18 17"><path d="M2 1 L16 8.5 L2 16Z" fill="#bdbdbd"/></svg>
<svg class="a" style="left:1378px;top:157px;" width="19" height="19" viewBox="0 0 19 19"><circle cx="9.5" cy="9.5" r="8.5" fill="#bdbdbd"/><rect x="8" y="8" width="3" height="7" fill="#535353"/><circle cx="9.5" cy="5" r="1.6" fill="#535353"/></svg>
<svg class="a" style="left:1378px;top:200px;" width="19" height="15" viewBox="0 0 19 15"><rect x="0.5" y="0.5" width="18" height="14" fill="#d0d0d0"/><rect x="2" y="2" width="4.5" height="5" fill="#222"/><rect x="7.5" y="2" width="4.5" height="5" fill="#555"/><rect x="13" y="2" width="4.5" height="5" fill="#999"/><rect x="2" y="8" width="4.5" height="5" fill="#888"/><rect x="7.5" y="8" width="4.5" height="5" fill="#666"/><rect x="13" y="8" width="4.5" height="5" fill="#777"/></svg>
<svg class="a" style="left:1376px;top:230px;" width="22" height="32" viewBox="0 0 22 32"><rect x="5" y="6" width="14" height="16" fill="#cfcfcf"/><text x="1" y="27" font-family="Liberation Serif" font-style="italic" font-size="19" fill="#d8d8d8" stroke="#535353" stroke-width="0.8" paint-order="stroke">fx</text></svg>
<div class="a" style="left:1367px;top:266px;width:38px;height:743px;background:#535353;box-shadow:inset 1px 0 0 #5d5d5d"></div>
<div class="a" style="left:1408px;top:74px;width:271px;height:17px;background:#424242;"></div>
<div class="a" style="left:1408px;top:74px;width:50px;height:17px;background:#535353;box-shadow:inset 1px 1px 0 #5e5e5e"></div>
<div class="a" style="left:1458px;top:74px;width:1px;height:17px;background:#353535;"></div>
<div class="a" style="left:1503px;top:74px;width:1px;height:17px;background:#3a3a3a;"></div>
<div class="t pt" style="left:1415px;top:77.11px;font-size:10.5px;color:#f0f0f0;font-weight:bold">Zeichen</div>
<div class="t pt" style="left:1465px;top:77.11px;font-size:10.5px;color:#a8a8a8;font-weight:bold">Absatz</div>
<div class="a" style="left:1408px;top:90px;width:271px;height:1px;background:#3a3a3a;"></div>
<svg class="a" style="left:1660px;top:78px;" width="16" height="10" viewBox="0 0 16 10"><path d="M0 3 H5 L2.5 6Z" fill="#d0d0d0"/><path d="M6 1.5 H15 M6 4.5 H15 M6 7.5 H15" stroke="#d0d0d0" stroke-width="1.2"/></svg>
<div class="fld" style="left:1417px;top:97px;width:111px;height:19px"></div><div class="btn" style="left:1509px;top:97px;width:19px;height:19px;border-radius:0 2px 2px 0"></div><svg class="a" style="left:1515.5px;top:105.0px;" width="7" height="4" viewBox="0 0 7 4"><path d="M0 0 H7 L3.5 4Z" fill="#e0e0e0"/></svg><div class="t pt" style="left:1423px;top:101.61px;font-size:10.5px;color:#ececec;">handwriting-dr...</div>
<div class="a" style="left:1539px;top:97px;width:75px;height:19px;background:#555;border:1px solid #4d4d4d"></div>
<div class="a" style="left:1595px;top:98px;width:18px;height:17px;background:#5c5c5c;"></div>
<svg class="a" style="left:1601px;top:105px;" width="7" height="4" viewBox="0 0 7 4"><path d="M0 0 H7 L3.5 4Z" fill="#8a8a8a"/></svg>
<div class="t pt" style="left:1545px;top:101.11px;font-size:10.5px;color:#8e8e8e;">Regular</div>
<div class="hsep" style="left:1408px;top:122px;width:230px"></div>
<div class="fld" style="left:1431px;top:127px;width:97px;height:19px"></div><div class="btn" style="left:1509px;top:127px;width:19px;height:19px;border-radius:0 2px 2px 0"></div><svg class="a" style="left:1515.5px;top:135.0px;" width="7" height="4" viewBox="0 0 7 4"><path d="M0 0 H7 L3.5 4Z" fill="#e0e0e0"/></svg><div class="t pt" style="left:1437px;top:131.61px;font-size:10.5px;color:#ececec;">18 Pt</div>
<div class="fld" style="left:1555px;top:127px;width:76px;height:19px"></div><div class="btn" style="left:1612px;top:127px;width:19px;height:19px;border-radius:0 2px 2px 0"></div><svg class="a" style="left:1618.5px;top:135.0px;" width="7" height="4" viewBox="0 0 7 4"><path d="M0 0 H7 L3.5 4Z" fill="#e0e0e0"/></svg><div class="t pt" style="left:1561px;top:131.61px;font-size:10.5px;color:#ececec;">30 Pt</div>
<div class="fld" style="left:1431px;top:152px;width:97px;height:18px"></div><div class="btn" style="left:1509px;top:152px;width:19px;height:18px;border-radius:0 2px 2px 0"></div><svg class="a" style="left:1515.5px;top:159.5px;" width="7" height="4" viewBox="0 0 7 4"><path d="M0 0 H7 L3.5 4Z" fill="#e0e0e0"/></svg><div class="t pt" style="left:1437px;top:156.11px;font-size:10.5px;color:#ececec;">Metrisch</div>
<div class="fld" style="left:1555px;top:152px;width:76px;height:18px"></div><div class="btn" style="left:1612px;top:152px;width:19px;height:18px;border-radius:0 2px 2px 0"></div><svg class="a" style="left:1618.5px;top:159.5px;" width="7" height="4" viewBox="0 0 7 4"><path d="M0 0 H7 L3.5 4Z" fill="#e0e0e0"/></svg><div class="t pt" style="left:1561px;top:156.11px;font-size:10.5px;color:#ececec;">0</div>
<svg class="a" style="left:1409px;top:126px;" width="20" height="21" viewBox="0 0 20 21"><text x="0" y="19" font-family="Liberation Serif" font-size="10" fill="#b8b8b8">T</text><text x="5" y="17" font-family="Liberation Serif" font-size="21" fill="#b8b8b8">T</text></svg>
<svg class="a" style="left:1533px;top:126px;" width="20" height="21" viewBox="0 0 20 21"><text x="6" y="10" font-family="Liberation Serif" font-size="11" fill="#b8b8b8">A</text><text x="6" y="20" font-family="Liberation Serif" font-size="11" fill="#b8b8b8">A</text><path d="M3 2 V10 M5 1 H19" stroke="#b8b8b8"/><path d="M3 1 l-2 3 h4z M3 11 l-2 -3h4z" fill="#b8b8b8"/></svg>
<svg class="a" style="left:1409px;top:150px;" width="20" height="22" viewBox="0 0 20 22"><text x="0" y="16" font-family="Liberation Sans" font-size="15" fill="#b8b8b8" letter-spacing="-3">V/A</text><path d="M6 19.5 H18" stroke="#b8b8b8"/></svg>
<svg class="a" style="left:1533px;top:150px;" width="21" height="22" viewBox="0 0 21 22"><rect x="1" y="1" width="19" height="12" fill="#8a8a8a"/><text x="1.5" y="12" font-family="Liberation Sans" font-weight="bold" font-size="12" fill="#444" letter-spacing="-1">VA</text><path d="M2 17.5 H19" stroke="#b8b8b8"/><path d="M1 17.5 l3 -2 v4z M20 17.5 l-3 -2 v4z" fill="#b8b8b8"/></svg>
<div class="hsep" style="left:1408px;top:174px;width:230px"></div>
<div class="fld" style="left:1432px;top:181px;width:54px;height:17px"></div><div class="t pt" style="left:1438px;top:184.61px;font-size:10.5px;color:#ececec;">100%</div>
<div class="fld" style="left:1573px;top:181px;width:54px;height:17px"></div><div class="t pt" style="left:1579px;top:184.61px;font-size:10.5px;color:#ececec;">100%</div>
<div class="fld" style="left:1432px;top:200px;width:54px;height:18px"></div><div class="t pt" style="left:1438px;top:204.11px;font-size:10.5px;color:#ececec;">0 Pt</div>
<div class="a" style="left:1573px;top:200px;width:54px;height:18px;background:#3d342f;border:1px solid #353535"></div>
<div class="t pt" style="left:1536px;top:204.11px;font-size:10.5px;color:#e0e0e0;">Farbe:</div>
<svg class="a" style="left:1409px;top:178px;" width="22" height="21" viewBox="0 0 22 21"><text x="6" y="18" font-family="Liberation Serif" font-size="21" fill="#b8b8b8">T</text><path d="M3.5 3 V18" stroke="#b8b8b8"/><path d="M3.5 2 l-2.5 3h5z M3.5 19 l-2.5 -3h5z" fill="#b8b8b8"/></svg>
<svg class="a" style="left:1550px;top:178px;" width="22" height="22" viewBox="0 0 22 22"><text x="3" y="16" font-family="Liberation Serif" font-weight="bold" font-size="19" fill="#b8b8b8">T</text><path d="M2 19.5 H19" stroke="#b8b8b8"/><path d="M1 19.5 l3 -2 v4z M20 19.5 l-3 -2 v4z" fill="#b8b8b8"/></svg>
<svg class="a" style="left:1409px;top:199px;" width="22" height="22" viewBox="0 0 22 22"><text x="0" y="14" font-family="Liberation Sans" font-size="14" fill="#b8b8b8">A</text><text x="11" y="10" font-family="Liberation Sans" font-size="10" fill="#b8b8b8">a</text><path d="M0 16.5 H12" stroke="#b8b8b8"/><path d="M15.5 13 V21" stroke="#b8b8b8"/><path d="M15.5 12 l-2 3h4z" fill="#b8b8b8"/></svg>
<div class="hsep" style="left:1408px;top:222px;width:230px"></div>
<svg class="a" style="left:1408px;top:224px;" width="220" height="28" viewBox="0 0 220 28"><text x="24" y="20" font-family="Liberation Serif" font-weight="bold" font-size="15.5" fill="#c8c8c8" >T</text><text x="48" y="20" font-family="Liberation Serif" font-weight="bold" font-size="15.5" fill="#c8c8c8" font-style="italic">T</text><text x="69" y="20" font-family="Liberation Serif" font-weight="bold" font-size="15.5" fill="#c8c8c8" letter-spacing="-1">TT</text><text x="94" y="20" font-family="Liberation Serif" font-weight="bold" font-size="15.5" fill="#c8c8c8">T</text><text x="103" y="20" font-family="Liberation Serif" font-weight="bold" font-size="10" fill="#c8c8c8">T</text><text x="119" y="20" font-family="Liberation Serif" font-weight="bold" font-size="15.5" fill="#c8c8c8" >T</text><text x="130" y="12" font-family="Liberation Serif" font-size="7" fill="#c8c8c8">1</text><text x="144" y="20" font-family="Liberation Serif" font-weight="bold" font-size="15.5" fill="#c8c8c8" >T</text><text x="155" y="23" font-family="Liberation Serif" font-size="7" fill="#c8c8c8">1</text><text x="168" y="20" font-family="Liberation Serif" font-weight="bold" font-size="15.5" fill="#c8c8c8" >T</text><path d="M168 23.5 H181" stroke="#c8c8c8"/><text x="192" y="20" font-family="Liberation Serif" font-weight="bold" font-size="15.5" fill="#c8c8c8" >T</text><path d="M192 14.5 H206" stroke="#c8c8c8" stroke-width="1.4"/></svg>
<div class="hsep" style="left:1408px;top:254px;width:230px"></div>
<svg class="a" style="left:1408px;top:258px;" width="220" height="24" viewBox="0 0 220 24"><text x="24" y="18" font-family="Liberation Serif" font-style="italic" font-weight="bold" font-size="15" fill="#7c7c7c">fi</text><text x="48" y="18" font-family="Liberation Serif" font-style="italic" font-weight="bold" font-size="15" fill="#7c7c7c">ℴ</text><text x="72" y="18" font-family="Liberation Serif" font-style="italic" font-weight="bold" font-size="15" fill="#7c7c7c">st</text><text x="96" y="18" font-family="Liberation Serif" font-style="italic" font-weight="bold" font-size="15" fill="#7c7c7c">A</text><text x="120" y="18" font-family="Liberation Serif" font-weight="bold" font-size="13" fill="#7c7c7c">aa</text><path d="M120 6.5 H133" stroke="#7c7c7c"/><text x="144" y="18" font-family="Liberation Serif" font-style="italic" font-weight="bold" font-size="15" fill="#7c7c7c">T</text><text x="168" y="18" font-family="Liberation Serif" font-size="14" fill="#7c7c7c">1</text><text x="175" y="11" font-family="Liberation Serif" font-size="8" fill="#7c7c7c">st</text><text x="192" y="18" font-family="Liberation Serif" font-style="italic" font-weight="bold" font-size="15" fill="#7c7c7c">½</text></svg>
<div class="hsep" style="left:1408px;top:286px;width:230px"></div>
<div class="dd" style="left:1416px;top:293px;width:115px;height:18px;border-radius:3px"></div>
<div class="t pt" style="left:1423px;top:297.11px;font-size:10.5px;color:#e6e6e6;">Deutsch: neue Re...</div>
<svg class="a" style="left:1520px;top:297px;" width="7" height="10" viewBox="0 0 7 10"><path d="M0.5 4 L3.5 0.5 L6.5 4Z M0.5 6 L3.5 9.5 L6.5 6Z" fill="#e0e0e0"/></svg>
<svg class="a" style="left:1536px;top:294px;" width="16" height="17" viewBox="0 0 16 17"><text x="0" y="9" font-family="Liberation Serif" font-size="10" fill="#c0c0c0">a</text><text x="6" y="15" font-family="Liberation Serif" font-size="12" fill="#c0c0c0">a</text></svg>
<div class="dd" style="left:1558px;top:293px;width:73px;height:18px;border-radius:3px"></div>
<div class="t pt" style="left:1565px;top:297.11px;font-size:10.5px;color:#e6e6e6;">Scharf</div>
<svg class="a" style="left:1619px;top:297px;" width="7" height="10" viewBox="0 0 7 10"><path d="M0.5 4 L3.5 0.5 L6.5 4Z M0.5 6 L3.5 9.5 L6.5 6Z" fill="#e0e0e0"/></svg>
<div class="a" style="left:1408px;top:317px;width:271px;height:4px;background:#2c2c2c;"></div>
<div class="a" style="left:1408px;top:321px;width:271px;height:16px;background:#424242;"></div>
<div class="a" style="left:1408px;top:321px;width:83px;height:16px;background:#535353;box-shadow:inset 1px 1px 0 #5e5e5e"></div>
<div class="a" style="left:1491px;top:321px;width:1px;height:16px;background:#353535;"></div>
<div class="a" style="left:1578px;top:321px;width:1px;height:16px;background:#3a3a3a;"></div>
<div class="t pt" style="left:1415px;top:323.11px;font-size:10.5px;color:#f0f0f0;font-weight:bold">Absatzformate</div>
<div class="t pt" style="left:1498px;top:323.11px;font-size:10.5px;color:#a8a8a8;font-weight:bold">Zeichenformate</div>
<svg class="a" style="left:1660px;top:324px;" width="16" height="10" viewBox="0 0 16 10"><path d="M0 3 H5 L2.5 6Z" fill="#d0d0d0"/><path d="M6 1.5 H15 M6 4.5 H15 M6 7.5 H15" stroke="#d0d0d0" stroke-width="1.2"/></svg>
<div class="a" style="left:1408px;top:337px;width:256px;height:202px;background:#454545;"></div>
<div class="a" style="left:1664px;top:337px;width:15px;height:202px;background:#404040;box-shadow:inset 1px 0 0 #3a3a3a"></div>
<div class="a" style="left:1408px;top:338px;width:255px;height:23px;background:#5b6878;"></div>
<div class="t pt" style="left:1415px;top:344.11px;font-size:10.5px;color:#f2f2f2;font-style:italic">Basisabsatz</div>
<div class="a" style="left:1408px;top:539px;width:271px;height:18px;background:#535353;box-shadow:inset 0 1px 0 #5f5f5f"></div>
<svg class="a" style="left:1545px;top:541px;" width="18" height="14" viewBox="0 0 18 14"><path d="M3 8 A5 5 0 1 1 8 13" fill="none" stroke="#8a8a8a" stroke-width="1.5"/><path d="M1 6 l3 3 l2 -4z" fill="#8a8a8a"/><path d="M3 13.5 H15" stroke="#8a8a8a"/></svg>
<svg class="a" style="left:1575px;top:541px;" width="16" height="14" viewBox="0 0 16 14"><path d="M2 7 L6 12 L14 1" fill="none" stroke="#8a8a8a" stroke-width="2.4"/></svg>
<svg class="a" style="left:1606px;top:541px;" width="14" height="14" viewBox="0 0 14 14"><rect x="4" y="2" width="9" height="11" fill="#c8c8c8"/><path d="M1 9 L4 12" stroke="#c8c8c8" stroke-width="1.5"/></svg>
<svg class="a" style="left:1636px;top:541px;" width="14" height="14" viewBox="0 0 14 14"><rect x="2.5" y="3.5" width="9" height="10" fill="none" stroke="#8a8a8a"/><path d="M1 2.5 H13 M5 1 H9 M5 5 V12 M7 5 V12 M9 5 V12" stroke="#8a8a8a"/></svg>
<div class="a" style="left:1408px;top:557px;width:271px;height:4px;background:#2c2c2c;"></div>
<div class="a" style="left:1408px;top:561px;width:271px;height:17px;background:#424242;"></div>
<div class="a" style="left:1408px;top:561px;width:47px;height:17px;background:#535353;box-shadow:inset 1px 1px 0 #5e5e5e"></div>
<div class="a" style="left:1455px;top:561px;width:1px;height:17px;background:#353535;"></div>
<div class="a" style="left:1500px;top:561px;width:1px;height:17px;background:#3a3a3a;"></div>
<div class="a" style="left:1543px;top:561px;width:1px;height:17px;background:#3a3a3a;"></div>
<div class="t lt" style="left:1414px;top:564.11px;font-size:10.5px;color:#f0f0f0;font-weight:bold">Ebenen</div>
<div class="t lt" style="left:1462px;top:564.11px;font-size:10.5px;color:#a8a8a8;font-weight:bold">Kanäle</div>
<div class="t lt" style="left:1509px;top:564.11px;font-size:10.5px;color:#a8a8a8;font-weight:bold">Pfade</div>
<svg class="a" style="left:1660px;top:565px;" width="16" height="10" viewBox="0 0 16 10"><path d="M0 3 H5 L2.5 6Z" fill="#d0d0d0"/><path d="M6 1.5 H15 M6 4.5 H15 M6 7.5 H15" stroke="#d0d0d0" stroke-width="1.2"/></svg>
<div class="a" style="left:1408px;top:578px;width:271px;height:431px;background:#535353;"></div>
<div class="dd" style="left:1413px;top:583px;width:74px;height:18px;border-radius:3px"></div>
<svg class="a" style="left:1419px;top:586px;" width="12" height="12" viewBox="0 0 12 12"><circle cx="7" cy="5" r="3.5" fill="none" stroke="#d0d0d0" stroke-width="1.4"/><path d="M4.5 7.5 L1 11" stroke="#d0d0d0" stroke-width="1.6"/></svg>
<div class="t lt" style="left:1434px;top:587.11px;font-size:10.5px;color:#e8e8e8;">Art</div>
<svg class="a" style="left:1475px;top:587px;" width="7" height="10" viewBox="0 0 7 10"><path d="M0.5 4 L3.5 0.5 L6.5 4Z M0.5 6 L3.5 9.5 L6.5 6Z" fill="#e0e0e0"/></svg>
<svg class="a" style="left:1520px;top:585px;" width="15" height="13" viewBox="0 0 15 13"><rect x="0.5" y="0.5" width="14" height="12" fill="none" stroke="#c0c0c0"/><path d="M2 11 L6 6 L9 9 L11 7 L13 11Z" fill="#c0c0c0"/><circle cx="10" cy="4" r="1.3" fill="#c0c0c0"/></svg>
<svg class="a" style="left:1544px;top:584px;" width="14" height="14" viewBox="0 0 14 14"><circle cx="7" cy="7" r="6" fill="#bdbdbd"/><path d="M7 1 A6 6 0 0 0 7 13 Z" fill="#707070"/><path d="M4 11 L10 3" stroke="#535353" stroke-width="1.5"/></svg>
<svg class="a" style="left:1567px;top:584px;" width="14" height="15" viewBox="0 0 14 15"><text x="0" y="13" font-family="Liberation Serif" font-size="16" fill="#c0c0c0">T</text></svg>
<svg class="a" style="left:1592px;top:584px;" width="15" height="15" viewBox="0 0 15 15"><rect x="2.5" y="2.5" width="10" height="10" fill="none" stroke="#c0c0c0"/><rect x="0.5" y="0.5" width="4" height="4" fill="#535353" stroke="#c0c0c0"/><rect x="10.5" y="0.5" width="4" height="4" fill="#535353" stroke="#c0c0c0"/><rect x="0.5" y="10.5" width="4" height="4" fill="#535353" stroke="#c0c0c0"/><rect x="10.5" y="10.5" width="4" height="4" fill="#535353" stroke="#c0c0c0"/></svg>
<svg class="a" style="left:1617px;top:584px;" width="14" height="15" viewBox="0 0 14 15"><rect x="5.5" y="0.5" width="8" height="10" fill="none" stroke="#c0c0c0"/><rect x="0.5" y="6.5" width="7" height="8" fill="#a8a8a8"/></svg>
<div class="a" style="left:1665px;top:584px;width:9px;height:16px;background:#3a3a3a;border:1px solid #333"></div>
<div class="a" style="left:1666px;top:585px;width:7px;height:7px;background:#7a7a7a;"></div>
<div class="hsep" style="left:1408px;top:605px;width:271px"></div>
<div class="dd" style="left:1413px;top:610px;width:146px;height:19px;border-radius:3px"></div>
<div class="t lt" style="left:1420px;top:615.11px;font-size:10.5px;color:#e8e8e8;">Normal</div>
<svg class="a" style="left:1548px;top:615px;" width="7" height="10" viewBox="0 0 7 10"><path d="M0.5 4 L3.5 0.5 L6.5 4Z M0.5 6 L3.5 9.5 L6.5 6Z" fill="#e0e0e0"/></svg>
<div class="t lt" style="left:1567px;top:613.11px;font-size:10.5px;color:#e8e8e8;">Deckkraft:</div>
<div class="a" style="left:1618px;top:611px;width:57px;height:18px;background:#3a3a3a;border:1px solid #333"></div>
<div class="a" style="left:1656px;top:611px;width:19px;height:18px;background:#666;border-left:1px solid #4a4a4a"></div>
<svg class="a" style="left:1662px;top:619px;" width="7" height="4" viewBox="0 0 7 4"><path d="M0 0 H7 L3.5 4Z" fill="#e0e0e0"/></svg>
<div class="t lt" style="left:1623px;top:615.11px;font-size:10.5px;color:#ececec;">100%</div>
<div class="hsep" style="left:1408px;top:632px;width:271px"></div>
<div class="t lt" style="left:1414px;top:643.11px;font-size:10.5px;color:#e8e8e8;">Fixieren:</div>
<svg class="a" style="left:1461px;top:641px;" width="13" height="13" viewBox="0 0 13 13"><rect x="0.5" y="0.5" width="12" height="12" fill="#888"/><rect x="1" y="1" width="3.7" height="3.7" fill="#ddd"/><rect x="8.3" y="1" width="3.7" height="3.7" fill="#ddd"/><rect x="4.7" y="4.7" width="3.7" height="3.7" fill="#ddd"/><rect x="1" y="8.3" width="3.7" height="3.7" fill="#ddd"/><rect x="8.3" y="8.3" width="3.7" height="3.7" fill="#ddd"/></svg>
<svg class="a" style="left:1481px;top:640px;" width="18" height="15" viewBox="0 0 18 15"><path d="M6 10 L16 1" stroke="#c8c8c8" stroke-width="2"/><path d="M1 14 Q2 9 6 9 Q8 11 6 13 Q4 15 1 14Z" fill="#c8c8c8"/></svg>
<svg class="a" style="left:1504px;top:640px;" width="15" height="15" viewBox="0 0 15 15"><path d="M7.5 1 V14 M1 7.5 H14" stroke="#c8c8c8" stroke-width="1.4"/><path d="M7.5 0 l-2.5 3h5z M7.5 15 l-2.5 -3h5z M0 7.5 l3 -2.5v5z M15 7.5 l-3 -2.5v5z" fill="#c8c8c8"/></svg>
<svg class="a" style="left:1527px;top:640px;" width="13" height="15" viewBox="0 0 13 15"><path d="M3.5 7 V4.5 A3 3 0 0 1 9.5 4.5 V7" fill="none" stroke="#c8c8c8" stroke-width="1.6"/><rect x="1.5" y="7" width="10" height="7" fill="#c8c8c8"/></svg>
<div class="t lt" style="left:1581px;top:642.11px;font-size:10.5px;color:#e8e8e8;">Fläche:</div>
<div class="a" style="left:1618px;top:639px;width:57px;height:18px;background:#3a3a3a;border:1px solid #333"></div>
<div class="a" style="left:1656px;top:639px;width:19px;height:18px;background:#666;border-left:1px solid #4a4a4a"></div>
<svg class="a" style="left:1662px;top:647px;" width="7" height="4" viewBox="0 0 7 4"><path d="M0 0 H7 L3.5 4Z" fill="#e0e0e0"/></svg>
<div class="t lt" style="left:1623px;top:643.11px;font-size:10.5px;color:#ececec;">100%</div>
<div class="a" style="left:1408px;top:659px;width:271px;height:4px;background:#3c3c3c;box-shadow:inset 0 1px 0 #4a4a4a"></div>
<div class="a" style="left:1408px;top:663px;width:256px;height:346px;background:#474747;"></div>
<div class="a" style="left:1664px;top:663px;width:15px;height:346px;background:#474747;box-shadow:inset 1px 0 0 #3a3a3a"></div>
<div class="a" style="left:1408px;top:664px;width:256px;height:28px;background:#535353;border-bottom:1px solid #3b3b3b;box-shadow:inset 0 1px 0 #5c5c5c"></div>
<div class="a" style="left:1408px;top:692px;width:256px;height:1px;background:#3d3d3d;"></div>
<div class="a" style="left:1438px;top:664px;width:1px;height:29px;background:#454545;"></div>
<div class="a" style="left:1417px;top:672.5px;width:11px;height:11px;background:transparent;border:1px solid #3f3f3f;box-shadow:inset 0 0 0 1px #4d4d4d"></div>
<svg class="a" style="left:1442px;top:668px;" width="31" height="21" viewBox="0 0 31 21"><rect x="0" y="0" width="31" height="21" fill="#3e3531" stroke="#222"/><circle cx="15.5" cy="10.5" r="5.5" fill="#e8e3d6"/><circle cx="15.5" cy="10.5" r="4.3" fill="#8ccfd0"/></svg>
<div class="t lt" style="left:1484px;top:673.61px;font-size:10.5px;color:#ececec;">Vektor-Smartobjekt</div>
<div class="a" style="left:1408px;top:693px;width:256px;height:28px;background:#535353;border-bottom:1px solid #3b3b3b;box-shadow:inset 0 1px 0 #5c5c5c"></div>
<div class="a" style="left:1408px;top:721px;width:256px;height:1px;background:#3d3d3d;"></div>
<div class="a" style="left:1438px;top:693px;width:1px;height:29px;background:#454545;"></div>
<div class="a" style="left:1417px;top:701.5px;width:11px;height:11px;background:transparent;border:1px solid #3f3f3f;box-shadow:inset 0 0 0 1px #4d4d4d"></div>
<svg class="a" style="left:1442px;top:697px;" width="31" height="21" viewBox="0 0 31 21"><rect x="1" y="1" width="29" height="19" fill="#fbfbfb" stroke="#8a3a20" stroke-width="2"/><path d="M10 12 H20" stroke="#999" stroke-width="0.8"/><path d="M8 9 H10 M21 9 H23" stroke="#ccc" stroke-width="0.8"/></svg>
<div class="t lt" style="left:1484px;top:702.61px;font-size:10.5px;color:#ececec;">Vorlage Vorderseite</div>
<div class="a" style="left:1408px;top:722px;width:256px;height:28px;background:#535353;border-bottom:1px solid #3b3b3b;box-shadow:inset 0 1px 0 #5c5c5c"></div>
<div class="a" style="left:1408px;top:750px;width:256px;height:1px;background:#3d3d3d;"></div>
<div class="a" style="left:1476px;top:722px;width:188px;height:28px;background:#5b6a85;"></div>
<div class="a" style="left:1438px;top:722px;width:1px;height:29px;background:#454545;"></div>
<svg class="a" style="left:1416px;top:731.5px;" width="14" height="10" viewBox="0 0 14 10"><path d="M1 5 Q7 -1 13 5 Q7 11 1 5Z" fill="#bdbdbd"/><circle cx="7" cy="5" r="2.6" fill="#3a3a3a"/></svg>
<svg class="a" style="left:1442px;top:726px;" width="31" height="21" viewBox="0 0 31 21"><defs><pattern id="chk" width="8" height="8" patternUnits="userSpaceOnUse"><rect width="8" height="8" fill="#fff"/><rect width="4" height="4" fill="#cfcfcf"/><rect x="4" y="4" width="4" height="4" fill="#cfcfcf"/></pattern></defs><rect x="0" y="0" width="31" height="21" fill="url(#chk)"/><path d="M14 13 Q16 10 18 13" stroke="#8ccfd0" fill="none"/></svg>
<div class="a" style="left:1440px;top:724px;width:35px;height:25px;background:transparent;border:1px solid #e8e8e8"></div>
<div class="t lt" style="left:1484px;top:731.61px;font-size:10.5px;color:#ececec;">Vektor-Smartobjekt</div>
<div class="a" style="left:1408px;top:751px;width:256px;height:28px;background:#535353;border-bottom:1px solid #3b3b3b;box-shadow:inset 0 1px 0 #5c5c5c"></div>
<div class="a" style="left:1408px;top:779px;width:256px;height:1px;background:#3d3d3d;"></div>
<div class="a" style="left:1438px;top:751px;width:1px;height:29px;background:#454545;"></div>
<svg class="a" style="left:1416px;top:760.5px;" width="14" height="10" viewBox="0 0 14 10"><path d="M1 5 Q7 -1 13 5 Q7 11 1 5Z" fill="#bdbdbd"/><circle cx="7" cy="5" r="2.6" fill="#3a3a3a"/></svg>
<svg class="a" style="left:1442px;top:755px;" width="31" height="21" viewBox="0 0 31 21"><defs><pattern id="chk" width="8" height="8" patternUnits="userSpaceOnUse"><rect width="8" height="8" fill="#fff"/><rect width="4" height="4" fill="#cfcfcf"/><rect x="4" y="4" width="4" height="4" fill="#cfcfcf"/></pattern></defs><rect x="0" y="0" width="31" height="21" fill="url(#chk)"/><rect x="17" y="7" width="14" height="14" fill="#3a3a3a"/><rect x="19" y="9" width="5" height="5" fill="#ddd"/><rect x="25" y="11" width="4" height="4" fill="#bbb"/><rect x="20" y="15" width="4" height="4" fill="#bbb"/><rect x="25" y="16" width="4" height="4" fill="#ddd"/></svg>
<div class="t lt" style="left:1484px;top:760.61px;font-size:10.5px;color:#ececec;">Vektor-Smartobjekt</div>
<div class="a" style="left:1408px;top:780px;width:256px;height:28px;background:#535353;border-bottom:1px solid #3b3b3b;box-shadow:inset 0 1px 0 #5c5c5c"></div>
<div class="a" style="left:1408px;top:808px;width:256px;height:1px;background:#3d3d3d;"></div>
<div class="a" style="left:1438px;top:780px;width:1px;height:29px;background:#454545;"></div>
<svg class="a" style="left:1416px;top:789.5px;" width="14" height="10" viewBox="0 0 14 10"><path d="M1 5 Q7 -1 13 5 Q7 11 1 5Z" fill="#bdbdbd"/><circle cx="7" cy="5" r="2.6" fill="#3a3a3a"/></svg>
<svg class="a" style="left:1442px;top:784px;" width="31" height="21" viewBox="0 0 31 21"><defs><pattern id="chk" width="8" height="8" patternUnits="userSpaceOnUse"><rect width="8" height="8" fill="#fff"/><rect width="4" height="4" fill="#cfcfcf"/><rect x="4" y="4" width="4" height="4" fill="#cfcfcf"/></pattern></defs><rect x="0" y="0" width="31" height="21" fill="url(#chk)"/><rect x="0" y="14" width="31" height="7" fill="#3e3531"/><rect x="17" y="7" width="14" height="14" fill="#3a3a3a"/><rect x="19" y="9" width="5" height="5" fill="#ddd"/><rect x="25" y="11" width="4" height="4" fill="#bbb"/><rect x="20" y="15" width="4" height="4" fill="#bbb"/><rect x="25" y="16" width="4" height="4" fill="#ddd"/></svg>
<div class="t lt" style="left:1484px;top:789.61px;font-size:10.5px;color:#ececec;">Vektor-Smartobjekt</div>
<div class="a" style="left:1408px;top:809px;width:256px;height:38px;background:#535353;border-bottom:1px solid #3b3b3b;box-shadow:inset 0 1px 0 #5c5c5c"></div>
<div class="a" style="left:1408px;top:847px;width:256px;height:1px;background:#3d3d3d;"></div>
<div class="a" style="left:1438px;top:809px;width:1px;height:39px;background:#454545;"></div>
<svg class="a" style="left:1416px;top:823.5px;" width="14" height="10" viewBox="0 0 14 10"><path d="M1 5 Q7 -1 13 5 Q7 11 1 5Z" fill="#bdbdbd"/><circle cx="7" cy="5" r="2.6" fill="#3a3a3a"/></svg>
<svg class="a" style="left:1442px;top:816px;" width="31" height="24" viewBox="0 0 31 24"><rect x="0" y="0" width="31" height="24" fill="#fff"/><rect x="17" y="9" width="14" height="15" fill="#3a3a3a"/><rect x="20.5" y="12.5" width="8" height="8" fill="none" stroke="#ccc"/><circle cx="20.5" cy="12.5" r="1.3" fill="#ccc"/><circle cx="28.5" cy="12.5" r="1.3" fill="#ccc"/><circle cx="20.5" cy="20.5" r="1.3" fill="#ccc"/><circle cx="28.5" cy="20.5" r="1.3" fill="#ccc"/></svg>
<div class="t lt" style="left:1484px;top:823.61px;font-size:10.5px;color:#ececec;">Rechteck 2</div>
<div class="a" style="left:1408px;top:848px;width:256px;height:28px;background:#535353;border-bottom:1px solid #3b3b3b;box-shadow:inset 0 1px 0 #5c5c5c"></div>
<div class="a" style="left:1408px;top:876px;width:256px;height:1px;background:#3d3d3d;"></div>
<div class="a" style="left:1438px;top:848px;width:1px;height:29px;background:#454545;"></div>
<svg class="a" style="left:1416px;top:857.5px;" width="14" height="10" viewBox="0 0 14 10"><path d="M1 5 Q7 -1 13 5 Q7 11 1 5Z" fill="#bdbdbd"/><circle cx="7" cy="5" r="2.6" fill="#3a3a3a"/></svg>
<svg class="a" style="left:1442px;top:852px;" width="31" height="21" viewBox="0 0 31 21"><defs><pattern id="chk" width="8" height="8" patternUnits="userSpaceOnUse"><rect width="8" height="8" fill="#fff"/><rect width="4" height="4" fill="#cfcfcf"/><rect x="4" y="4" width="4" height="4" fill="#cfcfcf"/></pattern></defs><rect x="0" y="0" width="31" height="21" fill="url(#chk)"/></svg>
<div class="t lt" style="left:1484px;top:857.61px;font-size:10.5px;color:#ececec;">Meine Ebene Kopie</div>
<div class="a" style="left:1408px;top:877px;width:256px;height:28px;background:#535353;border-bottom:1px solid #3b3b3b;box-shadow:inset 0 1px 0 #5c5c5c"></div>
<div class="a" style="left:1408px;top:905px;width:256px;height:1px;background:#3d3d3d;"></div>
<div class="a" style="left:1438px;top:877px;width:1px;height:29px;background:#454545;"></div>
<svg class="a" style="left:1416px;top:886.5px;" width="14" height="10" viewBox="0 0 14 10"><path d="M1 5 Q7 -1 13 5 Q7 11 1 5Z" fill="#bdbdbd"/><circle cx="7" cy="5" r="2.6" fill="#3a3a3a"/></svg>
<svg class="a" style="left:1442px;top:881px;" width="31" height="21" viewBox="0 0 31 21"><rect x="1" y="1" width="29" height="19" fill="#fbfbfb" stroke="#8a3a20" stroke-width="2"/><path d="M10 12 H20" stroke="#999" stroke-width="0.8"/><path d="M8 9 H10 M21 9 H23" stroke="#ccc" stroke-width="0.8"/></svg>
<div class="t lt" style="left:1484px;top:886.61px;font-size:10.5px;color:#ececec;">Vorlage Rückseite</div>
</body></html>
